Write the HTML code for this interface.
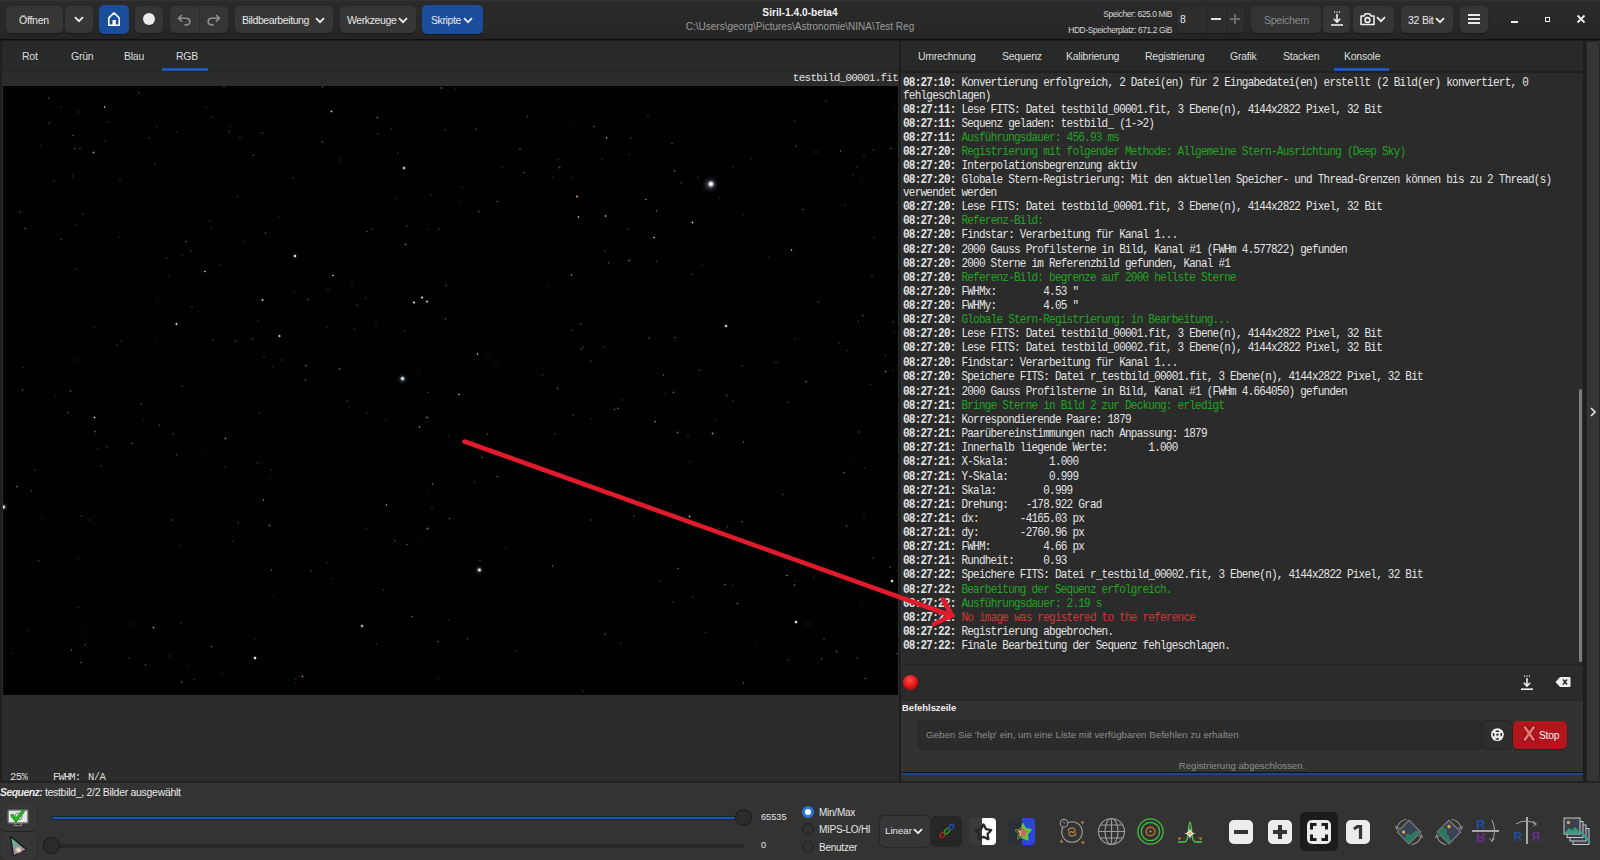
<!DOCTYPE html>
<html><head><meta charset="utf-8"><style>
*{margin:0;padding:0;box-sizing:border-box}
html,body{width:1600px;height:860px;overflow:hidden;background:#333333;font-family:"Liberation Sans",sans-serif;color:#e8e8e8}
.a{position:absolute}
.btn{position:absolute;background:#363636;border-radius:5px;box-shadow:0 1px 1px rgba(0,0,0,.35)}
.lbl{position:absolute;font-size:10.5px;letter-spacing:-0.24px;color:#e6e6e6;white-space:pre;line-height:12px}
.mono{font-family:"Liberation Mono",monospace}
#con{position:absolute;left:902px;top:73px;width:681px;height:591px;background:#2b2b2b;overflow:hidden}
#con pre{position:absolute;left:1px;top:3.6px;font-family:"Liberation Mono",monospace;font-size:11px;letter-spacing:-0.76px;line-height:11.667px;color:#e4e4e4;white-space:pre;transform:scaleY(1.08);transform-origin:0 0}
#con pre div{padding-bottom:1.463px}
#con b{font-weight:bold}
.g{color:#22a322}
.r{color:#d43535}
.star{position:absolute;border-radius:50%}
</style></head><body>
<div class="a" style="left:0;top:0;width:1600px;height:39px;background:linear-gradient(#383838 0,#2a2a2a 1.5px,#282828 30px,#262626 34px,#232323 39px)"></div>
<div class="a" style="left:0;top:39px;width:1600px;height:1px;background:#111111"></div>
<div class="a" style="left:0;top:40px;width:1600px;height:1px;background:#1b1b1b"></div>
<div class="btn" style="left:6px;top:6px;width:57px;height:27px;"></div>
<div class="lbl" style="left:19px;top:14px">Öffnen</div>
<div class="btn" style="left:65px;top:6px;width:28px;height:27px;"></div>
<svg class="a" style="left:74px;top:16px" width="10" height="7" viewBox="0 0 10 7"><path d="M1 1.2 L5 5.2 L9 1.2" fill="none" stroke="#ededed" stroke-width="1.8"/></svg>
<div class="btn" style="left:99px;top:5px;width:30px;height:29px;background:#1a4e9c;"></div>
<svg class="a" style="left:107px;top:11px" width="15" height="16" viewBox="0 0 15 16"><path d="M1.8 14.2 V6.8 L7 1.9 L12.2 6.8 V14.2 Z" fill="none" stroke="#ffffff" stroke-width="1.6" stroke-linejoin="round"/><rect x="5.5" y="9" width="3.3" height="5.5" fill="#fff"/></svg>
<div class="btn" style="left:135px;top:6px;width:28px;height:27px;"></div>
<div class="a" style="left:143px;top:13px;width:12px;height:12px;border-radius:50%;background:#ececec"></div>
<div class="btn" style="left:170px;top:6px;width:58px;height:27px;"></div>
<div class="a" style="left:199px;top:6px;width:1px;height:27px;background:#2a2a2a"></div>
<svg class="a" style="left:177px;top:12.7px" width="15" height="13" viewBox="0 0 15 13"><path d="M5 2 L1.6 5.3 L5 8.6 M1.8 5.3 H9.5 A3.3 3.3 0 0 1 9.5 11.9 H7.5" fill="none" stroke="#8e8e8e" stroke-width="1.6"/></svg>
<svg class="a" style="left:206px;top:12.7px" width="15" height="13" viewBox="0 0 15 13"><path d="M10 2 L13.4 5.3 L10 8.6 M13.2 5.3 H5.5 A3.3 3.3 0 0 0 5.5 11.9 H7.5" fill="none" stroke="#8e8e8e" stroke-width="1.6"/></svg>
<div class="btn" style="left:235px;top:6px;width:98px;height:27px;"></div>
<div class="lbl" style="left:242px;top:14px;letter-spacing:-0.4px">Bildbearbeitung</div>
<svg class="a" style="left:314.5px;top:17px" width="10" height="7" viewBox="0 0 10 7"><path d="M1 1.2 L5 5.2 L9 1.2" fill="none" stroke="#ededed" stroke-width="1.8"/></svg>
<div class="btn" style="left:340px;top:6px;width:76px;height:27px;"></div>
<div class="lbl" style="left:347px;top:14px;letter-spacing:-0.4px">Werkzeuge</div>
<svg class="a" style="left:398px;top:17px" width="10" height="7" viewBox="0 0 10 7"><path d="M1 1.2 L5 5.2 L9 1.2" fill="none" stroke="#ededed" stroke-width="1.8"/></svg>
<div class="btn" style="left:422px;top:5px;width:61px;height:29px;background:#1a4e9c;"></div>
<div class="lbl" style="left:431px;top:14px;letter-spacing:-0.4px">Skripte</div>
<svg class="a" style="left:463px;top:17px" width="10" height="7" viewBox="0 0 10 7"><path d="M1 1.2 L5 5.2 L9 1.2" fill="none" stroke="#ededed" stroke-width="1.8"/></svg>
<div class="a" style="left:600px;top:7px;width:400px;text-align:center;font-size:10.2px;font-weight:bold;color:#f0f0f0;line-height:12px">Siril-1.4.0-beta4</div>
<div class="a" style="left:600px;top:20.5px;width:400px;text-align:center;font-size:10px;color:#9c9c9c;line-height:12px">C:\Users\georg\Pictures\Astronomie\NINA\Test Reg</div>
<div class="a" style="left:1000px;top:8.8px;width:172px;text-align:right;font-size:8.4px;letter-spacing:-0.35px;color:#d8d8d8;line-height:10px">Speicher: 625.0 MiB</div>
<div class="a" style="left:1000px;top:24.8px;width:172px;text-align:right;font-size:8.4px;letter-spacing:-0.35px;color:#d8d8d8;line-height:10px">HDD-Speicherplatz: 671.2 GiB</div>
<div class="a" style="left:1177px;top:6px;width:67px;height:27px;background:#2e2e2e;border-radius:5px;box-shadow:0 1px 1px rgba(0,0,0,.3)"></div>
<div class="a" style="left:1207px;top:6px;width:1px;height:27px;background:#262626"></div>
<div class="a" style="left:1226px;top:6px;width:1px;height:27px;background:#262626"></div>
<div class="lbl" style="left:1180px;top:13px;color:#dfe6f0">8</div>
<div class="a" style="left:1211px;top:18px;width:10px;height:2px;background:#e0e0e0"></div>
<div class="a" style="left:1230px;top:18px;width:10px;height:1.6px;background:#6a6a6a"></div>
<div class="a" style="left:1234.2px;top:14px;width:1.6px;height:10px;background:#6a6a6a"></div>
<div class="btn" style="left:1251px;top:6px;width:70px;height:27px;background:#333333;"></div>
<div class="lbl" style="left:1264px;top:14px;color:#8a8a8a">Speichern</div>
<div class="btn" style="left:1323px;top:6px;width:27px;height:27px;"></div>
<svg class="a" style="left:1330px;top:11px" width="14" height="16" viewBox="0 0 14 16"><path d="M4 1.2 H5.2 M6.4 1.2 H7.6 M8.8 1.2 H10" stroke="#eee" stroke-width="1.2"/><path d="M7 3 V11 M3.8 7.8 L7 11 L10.2 7.8" fill="none" stroke="#eee" stroke-width="1.6"/><path d="M1 14 H13" stroke="#eee" stroke-width="1.6"/></svg>
<div class="btn" style="left:1353px;top:6px;width:41px;height:27px;"></div>
<svg class="a" style="left:1359px;top:12px" width="17" height="14" viewBox="0 0 17 14"><path d="M2 4 H5 L6.5 1.8 H10.5 L12 4 H15 V12.5 H2 Z" fill="none" stroke="#eee" stroke-width="1.6" stroke-linejoin="round"/><circle cx="8.5" cy="8" r="2.4" fill="none" stroke="#eee" stroke-width="1.6"/></svg>
<svg class="a" style="left:1376px;top:16px" width="10" height="7" viewBox="0 0 10 7"><path d="M1 1.2 L5 5.2 L9 1.2" fill="none" stroke="#ededed" stroke-width="1.8"/></svg>
<div class="btn" style="left:1401px;top:6px;width:52px;height:27px;"></div>
<div class="lbl" style="left:1408px;top:14px">32 Bit</div>
<svg class="a" style="left:1435px;top:17px" width="10" height="7" viewBox="0 0 10 7"><path d="M1 1.2 L5 5.2 L9 1.2" fill="none" stroke="#ededed" stroke-width="1.8"/></svg>
<div class="btn" style="left:1460px;top:6px;width:28px;height:27px;"></div>
<div class="a" style="left:1468px;top:14px;width:12px;height:1.8px;background:#eaeaea"></div>
<div class="a" style="left:1468px;top:18px;width:12px;height:1.8px;background:#eaeaea"></div>
<div class="a" style="left:1468px;top:22px;width:12px;height:1.8px;background:#eaeaea"></div>
<div class="a" style="left:1511px;top:20.8px;width:7px;height:1.8px;background:#eee"></div>
<div class="a" style="left:1544.8px;top:16.5px;width:5.5px;height:5.5px;border:1.8px solid #eee"></div>
<svg class="a" style="left:1576px;top:14px" width="10" height="10" viewBox="0 0 10 10"><path d="M1.5 1.5 L8.5 8.5 M8.5 1.5 L1.5 8.5" stroke="#eee" stroke-width="1.8"/></svg>
<div class="a" style="left:0;top:40px;width:2px;height:743px;background:#1f1f1f"></div>
<div class="a" style="left:2px;top:41px;width:897px;height:30px;background:#282929"></div>
<div class="a" style="left:2px;top:71px;width:897px;height:1px;background:#232323"></div>
<div class="a" style="left:2px;top:72px;width:897px;height:711px;background:#2c2c2c"></div>
<div class="lbl" style="left:22px;top:49.5px;color:#dcdcdc">Rot</div>
<div class="lbl" style="left:71px;top:49.5px;color:#dcdcdc">Grün</div>
<div class="lbl" style="left:124px;top:49.5px;color:#dcdcdc">Blau</div>
<div class="lbl" style="left:176px;top:49.5px;color:#dcdcdc">RGB</div>
<div class="a" style="left:162px;top:68px;width:46px;height:3px;background:#1d58b4"></div>
<div class="a mono" style="left:700px;top:72px;width:198px;text-align:right;font-size:11px;letter-spacing:-0.76px;color:#e0e0e0;line-height:13px;white-space:pre">testbild_00001.fit</div>
<div class="a" id="img" style="left:3px;top:86px;width:895px;height:609px;background:#010101;overflow:hidden"><div class="star" style="left:289.0px;top:90.9px;width:2.4px;height:2.4px;background:radial-gradient(circle,#515151 0,#515151 25%,transparent 70%)"></div><div class="star" style="left:63.7px;top:325.4px;width:2.4px;height:2.4px;background:radial-gradient(circle,#2c3f2c 0,#2c3f2c 25%,transparent 70%)"></div><div class="star" style="left:50.8px;top:308.0px;width:2.4px;height:2.4px;background:radial-gradient(circle,#2a2a2a 0,#2a2a2a 25%,transparent 70%)"></div><div class="star" style="left:387.3px;top:41.5px;width:2.4px;height:2.4px;background:radial-gradient(circle,#1f2d1f 0,#1f2d1f 25%,transparent 70%)"></div><div class="star" style="left:379.2px;top:502.6px;width:2.4px;height:2.4px;background:radial-gradient(circle,#2f2a1c 0,#2f2a1c 25%,transparent 70%)"></div><div class="star" style="left:563.8px;top:354.0px;width:2.4px;height:2.4px;background:radial-gradient(circle,#1e2b1e 0,#1e2b1e 25%,transparent 70%)"></div><div class="star" style="left:523.4px;top:29.2px;width:2.4px;height:2.4px;background:radial-gradient(circle,#363636 0,#363636 25%,transparent 70%)"></div><div class="star" style="left:497.6px;top:80.1px;width:2.4px;height:2.4px;background:radial-gradient(circle,#423b27 0,#423b27 25%,transparent 70%)"></div><div class="star" style="left:483.3px;top:346.7px;width:2.4px;height:2.4px;background:radial-gradient(circle,#4b432d 0,#4b432d 25%,transparent 70%)"></div><div class="star" style="left:91.1px;top:346.9px;width:2.4px;height:2.4px;background:radial-gradient(circle,#342c1a 0,#342c1a 25%,transparent 70%)"></div><div class="star" style="left:86.1px;top:432.7px;width:2.4px;height:2.4px;background:radial-gradient(circle,#4c4c4c 0,#4c4c4c 25%,transparent 70%)"></div><div class="star" style="left:553.4px;top:301.3px;width:2.4px;height:2.4px;background:radial-gradient(circle,#3b424a 0,#3b424a 25%,transparent 70%)"></div><div class="star" style="left:695.2px;top:282.6px;width:2.4px;height:2.4px;background:radial-gradient(circle,#453a22 0,#453a22 25%,transparent 70%)"></div><div class="star" style="left:267.4px;top:482.8px;width:2.4px;height:2.4px;background:radial-gradient(circle,#544b32 0,#544b32 25%,transparent 70%)"></div><div class="star" style="left:72.1px;top:181.9px;width:2.4px;height:2.4px;background:radial-gradient(circle,#473c23 0,#473c23 25%,transparent 70%)"></div><div class="star" style="left:652.4px;top:174.4px;width:2.4px;height:2.4px;background:radial-gradient(circle,#2c2c2c 0,#2c2c2c 25%,transparent 70%)"></div><div class="star" style="left:457.5px;top:99.5px;width:2.4px;height:2.4px;background:radial-gradient(circle,#3d3624 0,#3d3624 25%,transparent 70%)"></div><div class="star" style="left:835.0px;top:255.8px;width:2.4px;height:2.4px;background:radial-gradient(circle,#525252 0,#525252 25%,transparent 70%)"></div><div class="star" style="left:683.9px;top:348.0px;width:2.4px;height:2.4px;background:radial-gradient(circle,#5c4e2e 0,#5c4e2e 25%,transparent 70%)"></div><div class="star" style="left:303.5px;top:212.3px;width:2.4px;height:2.4px;background:radial-gradient(circle,#314731 0,#314731 25%,transparent 70%)"></div><div class="star" style="left:712.8px;top:40.9px;width:2.4px;height:2.4px;background:radial-gradient(circle,#2d2616 0,#2d2616 25%,transparent 70%)"></div><div class="star" style="left:423.6px;top:403.5px;width:2.4px;height:2.4px;background:radial-gradient(circle,#2b2415 0,#2b2415 25%,transparent 70%)"></div><div class="star" style="left:578.6px;top:603.8px;width:2.4px;height:2.4px;background:radial-gradient(circle,#49525c 0,#49525c 25%,transparent 70%)"></div><div class="star" style="left:253.8px;top:233.9px;width:2.4px;height:2.4px;background:radial-gradient(circle,#524529 0,#524529 25%,transparent 70%)"></div><div class="star" style="left:19.0px;top:280.2px;width:2.4px;height:2.4px;background:radial-gradient(circle,#233223 0,#233223 25%,transparent 70%)"></div><div class="star" style="left:103.7px;top:34.9px;width:2.4px;height:2.4px;background:radial-gradient(circle,#594b2c 0,#594b2c 25%,transparent 70%)"></div><div class="star" style="left:114.7px;top:149.8px;width:2.4px;height:2.4px;background:radial-gradient(circle,#343a41 0,#343a41 25%,transparent 70%)"></div><div class="star" style="left:71.0px;top:272.6px;width:2.4px;height:2.4px;background:radial-gradient(circle,#4b3f25 0,#4b3f25 25%,transparent 70%)"></div><div class="star" style="left:790.3px;top:497.9px;width:2.4px;height:2.4px;background:radial-gradient(circle,#425f42 0,#425f42 25%,transparent 70%)"></div><div class="star" style="left:248.3px;top:251.9px;width:2.4px;height:2.4px;background:radial-gradient(circle,#31373e 0,#31373e 25%,transparent 70%)"></div><div class="star" style="left:856.9px;top:90.9px;width:2.4px;height:2.4px;background:radial-gradient(circle,#332d1e 0,#332d1e 25%,transparent 70%)"></div><div class="star" style="left:206.6px;top:141.1px;width:2.4px;height:2.4px;background:radial-gradient(circle,#314731 0,#314731 25%,transparent 70%)"></div><div class="star" style="left:162.2px;top:170.7px;width:2.4px;height:2.4px;background:radial-gradient(circle,#272c31 0,#272c31 25%,transparent 70%)"></div><div class="star" style="left:477.8px;top:370.4px;width:2.4px;height:2.4px;background:radial-gradient(circle,#3c3624 0,#3c3624 25%,transparent 70%)"></div><div class="star" style="left:617.5px;top:312.9px;width:2.4px;height:2.4px;background:radial-gradient(circle,#4f4f4f 0,#4f4f4f 25%,transparent 70%)"></div><div class="star" style="left:408.0px;top:529.4px;width:2.4px;height:2.4px;background:radial-gradient(circle,#425f42 0,#425f42 25%,transparent 70%)"></div><div class="star" style="left:350.4px;top:242.0px;width:2.4px;height:2.4px;background:radial-gradient(circle,#24292e 0,#24292e 25%,transparent 70%)"></div><div class="star" style="left:567.1px;top:36.9px;width:2.4px;height:2.4px;background:radial-gradient(circle,#2c271a 0,#2c271a 25%,transparent 70%)"></div><div class="star" style="left:393.6px;top:65.9px;width:2.4px;height:2.4px;background:radial-gradient(circle,#4e4e4e 0,#4e4e4e 25%,transparent 70%)"></div><div class="star" style="left:90.5px;top:344.2px;width:2.4px;height:2.4px;background:radial-gradient(circle,#4a4a4a 0,#4a4a4a 25%,transparent 70%)"></div><div class="star" style="left:849.1px;top:372.8px;width:2.4px;height:2.4px;background:radial-gradient(circle,#2c271a 0,#2c271a 25%,transparent 70%)"></div><div class="star" style="left:549.0px;top:89.5px;width:2.4px;height:2.4px;background:radial-gradient(circle,#382f1c 0,#382f1c 25%,transparent 70%)"></div><div class="star" style="left:538.4px;top:287.8px;width:2.4px;height:2.4px;background:radial-gradient(circle,#252a2f 0,#252a2f 25%,transparent 70%)"></div><div class="star" style="left:888.6px;top:282.8px;width:2.4px;height:2.4px;background:radial-gradient(circle,#463b23 0,#463b23 25%,transparent 70%)"></div><div class="star" style="left:75.8px;top:61.2px;width:2.4px;height:2.4px;background:radial-gradient(circle,#3d331e 0,#3d331e 25%,transparent 70%)"></div><div class="star" style="left:427.6px;top:420.5px;width:2.4px;height:2.4px;background:radial-gradient(circle,#494949 0,#494949 25%,transparent 70%)"></div><div class="star" style="left:182.7px;top:578.8px;width:2.4px;height:2.4px;background:radial-gradient(circle,#3f3825 0,#3f3825 25%,transparent 70%)"></div><div class="star" style="left:617.1px;top:555.7px;width:2.4px;height:2.4px;background:radial-gradient(circle,#3d583d 0,#3d583d 25%,transparent 70%)"></div><div class="star" style="left:265.9px;top:390.5px;width:2.4px;height:2.4px;background:radial-gradient(circle,#2d2616 0,#2d2616 25%,transparent 70%)"></div><div class="star" style="left:463.3px;top:552.1px;width:2.4px;height:2.4px;background:radial-gradient(circle,#3e3725 0,#3e3725 25%,transparent 70%)"></div><div class="star" style="left:476.0px;top:473.4px;width:2.4px;height:2.4px;background:radial-gradient(circle,#3d3624 0,#3d3624 25%,transparent 70%)"></div><div class="star" style="left:548.3px;top:479.1px;width:2.4px;height:2.4px;background:radial-gradient(circle,#584f34 0,#584f34 25%,transparent 70%)"></div><div class="star" style="left:721.0px;top:497.4px;width:2.4px;height:2.4px;background:radial-gradient(circle,#574e34 0,#574e34 25%,transparent 70%)"></div><div class="star" style="left:177.9px;top:299.1px;width:2.4px;height:2.4px;background:radial-gradient(circle,#565656 0,#565656 25%,transparent 70%)"></div><div class="star" style="left:885.5px;top:480.2px;width:2.4px;height:2.4px;background:radial-gradient(circle,#463b23 0,#463b23 25%,transparent 70%)"></div><div class="star" style="left:172.3px;top:367.5px;width:2.4px;height:2.4px;background:radial-gradient(circle,#31373e 0,#31373e 25%,transparent 70%)"></div><div class="star" style="left:723.3px;top:439.4px;width:2.4px;height:2.4px;background:radial-gradient(circle,#3e341f 0,#3e341f 25%,transparent 70%)"></div><div class="star" style="left:71.0px;top:61.2px;width:2.4px;height:2.4px;background:radial-gradient(circle,#463f2a 0,#463f2a 25%,transparent 70%)"></div><div class="star" style="left:301.4px;top:292.9px;width:2.4px;height:2.4px;background:radial-gradient(circle,#4f4f4f 0,#4f4f4f 25%,transparent 70%)"></div><div class="star" style="left:428.4px;top:396.7px;width:2.4px;height:2.4px;background:radial-gradient(circle,#5b5b5b 0,#5b5b5b 25%,transparent 70%)"></div><div class="star" style="left:746.6px;top:72.0px;width:2.4px;height:2.4px;background:radial-gradient(circle,#403926 0,#403926 25%,transparent 70%)"></div><div class="star" style="left:427.1px;top:107.7px;width:2.4px;height:2.4px;background:radial-gradient(circle,#5a4c2d 0,#5a4c2d 25%,transparent 70%)"></div><div class="star" style="left:76.5px;top:575.2px;width:2.4px;height:2.4px;background:radial-gradient(circle,#444d56 0,#444d56 25%,transparent 70%)"></div><div class="star" style="left:413.8px;top:451.7px;width:2.4px;height:2.4px;background:radial-gradient(circle,#2d281b 0,#2d281b 25%,transparent 70%)"></div><div class="star" style="left:151.1px;top:76.4px;width:2.4px;height:2.4px;background:radial-gradient(circle,#223122 0,#223122 25%,transparent 70%)"></div><div class="star" style="left:809.5px;top:490.2px;width:2.4px;height:2.4px;background:radial-gradient(circle,#223122 0,#223122 25%,transparent 70%)"></div><div class="star" style="left:739.4px;top:596.0px;width:2.4px;height:2.4px;background:radial-gradient(circle,#524529 0,#524529 25%,transparent 70%)"></div><div class="star" style="left:138.5px;top:332.9px;width:2.4px;height:2.4px;background:radial-gradient(circle,#292929 0,#292929 25%,transparent 70%)"></div><div class="star" style="left:715.0px;top:441.4px;width:2.4px;height:2.4px;background:radial-gradient(circle,#202e20 0,#202e20 25%,transparent 70%)"></div><div class="star" style="left:670.3px;top:83.8px;width:2.4px;height:2.4px;background:radial-gradient(circle,#5f5539 0,#5f5539 25%,transparent 70%)"></div><div class="star" style="left:739.0px;top:127.5px;width:2.4px;height:2.4px;background:radial-gradient(circle,#383221 0,#383221 25%,transparent 70%)"></div><div class="star" style="left:261.3px;top:145.5px;width:2.4px;height:2.4px;background:radial-gradient(circle,#4d4126 0,#4d4126 25%,transparent 70%)"></div><div class="star" style="left:231.2px;top:254.2px;width:2.4px;height:2.4px;background:radial-gradient(circle,#303030 0,#303030 25%,transparent 70%)"></div><div class="star" style="left:814.2px;top:214.5px;width:2.4px;height:2.4px;background:radial-gradient(circle,#304530 0,#304530 25%,transparent 70%)"></div><div class="star" style="left:729.1px;top:313.7px;width:2.4px;height:2.4px;background:radial-gradient(circle,#405c40 0,#405c40 25%,transparent 70%)"></div><div class="star" style="left:116.0px;top:91.5px;width:2.4px;height:2.4px;background:radial-gradient(circle,#484848 0,#484848 25%,transparent 70%)"></div><div class="star" style="left:780.8px;top:471.9px;width:2.4px;height:2.4px;background:radial-gradient(circle,#4e4e4e 0,#4e4e4e 25%,transparent 70%)"></div><div class="star" style="left:694.1px;top:90.2px;width:2.4px;height:2.4px;background:radial-gradient(circle,#272c31 0,#272c31 25%,transparent 70%)"></div><div class="star" style="left:553.5px;top:72.3px;width:2.4px;height:2.4px;background:radial-gradient(circle,#2b2415 0,#2b2415 25%,transparent 70%)"></div><div class="star" style="left:610.2px;top:322.2px;width:2.4px;height:2.4px;background:radial-gradient(circle,#464646 0,#464646 25%,transparent 70%)"></div><div class="star" style="left:790.2px;top:33.6px;width:2.4px;height:2.4px;background:radial-gradient(circle,#342c1a 0,#342c1a 25%,transparent 70%)"></div><div class="star" style="left:36.6px;top:58.5px;width:2.4px;height:2.4px;background:radial-gradient(circle,#2f442f 0,#2f442f 25%,transparent 70%)"></div><div class="star" style="left:23.8px;top:543.5px;width:2.4px;height:2.4px;background:radial-gradient(circle,#23272c 0,#23272c 25%,transparent 70%)"></div><div class="star" style="left:290.5px;top:591.8px;width:2.4px;height:2.4px;background:radial-gradient(circle,#364e36 0,#364e36 25%,transparent 70%)"></div><div class="star" style="left:177.5px;top:167.8px;width:2.4px;height:2.4px;background:radial-gradient(circle,#324832 0,#324832 25%,transparent 70%)"></div><div class="star" style="left:722.2px;top:308.2px;width:2.4px;height:2.4px;background:radial-gradient(circle,#263726 0,#263726 25%,transparent 70%)"></div><div class="star" style="left:784.2px;top:572.8px;width:2.4px;height:2.4px;background:radial-gradient(circle,#273827 0,#273827 25%,transparent 70%)"></div><div class="star" style="left:798.7px;top:122.4px;width:2.4px;height:2.4px;background:radial-gradient(circle,#443d28 0,#443d28 25%,transparent 70%)"></div><div class="star" style="left:372.1px;top:237.9px;width:2.4px;height:2.4px;background:radial-gradient(circle,#3c3c3c 0,#3c3c3c 25%,transparent 70%)"></div><div class="star" style="left:600.2px;top:259.9px;width:2.4px;height:2.4px;background:radial-gradient(circle,#352d1a 0,#352d1a 25%,transparent 70%)"></div><div class="star" style="left:701.2px;top:545.3px;width:2.4px;height:2.4px;background:radial-gradient(circle,#312918 0,#312918 25%,transparent 70%)"></div><div class="star" style="left:126.9px;top:536.6px;width:2.4px;height:2.4px;background:radial-gradient(circle,#453e29 0,#453e29 25%,transparent 70%)"></div><div class="star" style="left:667.8px;top:56.3px;width:2.4px;height:2.4px;background:radial-gradient(circle,#473f2a 0,#473f2a 25%,transparent 70%)"></div><div class="star" style="left:885.7px;top:506.0px;width:2.4px;height:2.4px;background:radial-gradient(circle,#282d32 0,#282d32 25%,transparent 70%)"></div><div class="star" style="left:889.5px;top:244.9px;width:2.4px;height:2.4px;background:radial-gradient(circle,#423b27 0,#423b27 25%,transparent 70%)"></div><div class="star" style="left:318.3px;top:55.1px;width:2.4px;height:2.4px;background:radial-gradient(circle,#3f3f3f 0,#3f3f3f 25%,transparent 70%)"></div><div class="star" style="left:301.6px;top:278.3px;width:2.4px;height:2.4px;background:radial-gradient(circle,#555555 0,#555555 25%,transparent 70%)"></div><div class="star" style="left:343.2px;top:314.1px;width:2.4px;height:2.4px;background:radial-gradient(circle,#283a28 0,#283a28 25%,transparent 70%)"></div><div class="star" style="left:859.7px;top:67.7px;width:2.4px;height:2.4px;background:radial-gradient(circle,#5a5136 0,#5a5136 25%,transparent 70%)"></div><div class="star" style="left:869.4px;top:62.8px;width:2.4px;height:2.4px;background:radial-gradient(circle,#382f1c 0,#382f1c 25%,transparent 70%)"></div><div class="star" style="left:34.3px;top:473.4px;width:2.4px;height:2.4px;background:radial-gradient(circle,#393322 0,#393322 25%,transparent 70%)"></div><div class="star" style="left:733.3px;top:516.4px;width:2.4px;height:2.4px;background:radial-gradient(circle,#534629 0,#534629 25%,transparent 70%)"></div><div class="star" style="left:362.5px;top:325.8px;width:2.4px;height:2.4px;background:radial-gradient(circle,#324832 0,#324832 25%,transparent 70%)"></div><div class="star" style="left:442.0px;top:198.2px;width:2.4px;height:2.4px;background:radial-gradient(circle,#393939 0,#393939 25%,transparent 70%)"></div><div class="star" style="left:715.2px;top:110.7px;width:2.4px;height:2.4px;background:radial-gradient(circle,#2c2516 0,#2c2516 25%,transparent 70%)"></div><div class="star" style="left:839.6px;top:385.4px;width:2.4px;height:2.4px;background:radial-gradient(circle,#5b4d2d 0,#5b4d2d 25%,transparent 70%)"></div><div class="star" style="left:73.8px;top:520.4px;width:2.4px;height:2.4px;background:radial-gradient(circle,#2c2516 0,#2c2516 25%,transparent 70%)"></div><div class="star" style="left:771.8px;top:275.3px;width:2.4px;height:2.4px;background:radial-gradient(circle,#2a3d2a 0,#2a3d2a 25%,transparent 70%)"></div><div class="star" style="left:373.1px;top:556.5px;width:2.4px;height:2.4px;background:radial-gradient(circle,#4f472f 0,#4f472f 25%,transparent 70%)"></div><div class="star" style="left:37.5px;top:431.1px;width:2.4px;height:2.4px;background:radial-gradient(circle,#2f2a1c 0,#2f2a1c 25%,transparent 70%)"></div><div class="star" style="left:233.5px;top:109.3px;width:2.4px;height:2.4px;background:radial-gradient(circle,#3b321d 0,#3b321d 25%,transparent 70%)"></div><div class="star" style="left:474.7px;top:124.4px;width:2.4px;height:2.4px;background:radial-gradient(circle,#2f442f 0,#2f442f 25%,transparent 70%)"></div><div class="star" style="left:601.1px;top:163.7px;width:2.4px;height:2.4px;background:radial-gradient(circle,#5b5b5b 0,#5b5b5b 25%,transparent 70%)"></div><div class="star" style="left:889.9px;top:21.5px;width:2.4px;height:2.4px;background:radial-gradient(circle,#1c291c 0,#1c291c 25%,transparent 70%)"></div><div class="star" style="left:492.5px;top:114.4px;width:2.4px;height:2.4px;background:radial-gradient(circle,#463f2a 0,#463f2a 25%,transparent 70%)"></div><div class="star" style="left:836.2px;top:63.7px;width:2.4px;height:2.4px;background:radial-gradient(circle,#49525c 0,#49525c 25%,transparent 70%)"></div><div class="star" style="left:587.0px;top:331.5px;width:2.4px;height:2.4px;background:radial-gradient(circle,#2d412d 0,#2d412d 25%,transparent 70%)"></div><div class="star" style="left:274.6px;top:130.0px;width:2.4px;height:2.4px;background:radial-gradient(circle,#362d1b 0,#362d1b 25%,transparent 70%)"></div><div class="star" style="left:176.8px;top:536.1px;width:2.4px;height:2.4px;background:radial-gradient(circle,#564d33 0,#564d33 25%,transparent 70%)"></div><div class="star" style="left:361.4px;top:210.7px;width:2.4px;height:2.4px;background:radial-gradient(circle,#2b2619 0,#2b2619 25%,transparent 70%)"></div><div class="star" style="left:11.6px;top:379.9px;width:2.4px;height:2.4px;background:radial-gradient(circle,#2c3238 0,#2c3238 25%,transparent 70%)"></div><div class="star" style="left:145.1px;top:50.5px;width:2.4px;height:2.4px;background:radial-gradient(circle,#4a535d 0,#4a535d 25%,transparent 70%)"></div><div class="star" style="left:778.8px;top:407.4px;width:2.4px;height:2.4px;background:radial-gradient(circle,#283a28 0,#283a28 25%,transparent 70%)"></div><div class="star" style="left:215.8px;top:177.5px;width:2.4px;height:2.4px;background:radial-gradient(circle,#453e29 0,#453e29 25%,transparent 70%)"></div><div class="star" style="left:139.9px;top:270.5px;width:2.4px;height:2.4px;background:radial-gradient(circle,#382f1c 0,#382f1c 25%,transparent 70%)"></div><div class="star" style="left:860.6px;top:591.3px;width:2.4px;height:2.4px;background:radial-gradient(circle,#4b3f25 0,#4b3f25 25%,transparent 70%)"></div><div class="star" style="left:217.8px;top:587.1px;width:2.4px;height:2.4px;background:radial-gradient(circle,#3b3523 0,#3b3523 25%,transparent 70%)"></div><div class="star" style="left:318.3px;top:-0.3px;width:2.4px;height:2.4px;background:radial-gradient(circle,#404040 0,#404040 25%,transparent 70%)"></div><div class="star" style="left:424.1px;top:305.2px;width:2.4px;height:2.4px;background:radial-gradient(circle,#342e1f 0,#342e1f 25%,transparent 70%)"></div><div class="star" style="left:451.0px;top:2.0px;width:2.4px;height:2.4px;background:radial-gradient(circle,#383838 0,#383838 25%,transparent 70%)"></div><div class="star" style="left:127.7px;top:356.4px;width:2.4px;height:2.4px;background:radial-gradient(circle,#414141 0,#414141 25%,transparent 70%)"></div><div class="star" style="left:267.3px;top:382.5px;width:2.4px;height:2.4px;background:radial-gradient(circle,#1f2d1f 0,#1f2d1f 25%,transparent 70%)"></div><div class="star" style="left:856.8px;top:518.6px;width:2.4px;height:2.4px;background:radial-gradient(circle,#223122 0,#223122 25%,transparent 70%)"></div><div class="star" style="left:347.8px;top:197.6px;width:2.4px;height:2.4px;background:radial-gradient(circle,#473f2a 0,#473f2a 25%,transparent 70%)"></div><div class="star" style="left:253.4px;top:375.8px;width:2.4px;height:2.4px;background:radial-gradient(circle,#313131 0,#313131 25%,transparent 70%)"></div><div class="star" style="left:737.9px;top:434.4px;width:2.4px;height:2.4px;background:radial-gradient(circle,#394048 0,#394048 25%,transparent 70%)"></div><div class="star" style="left:656.3px;top:493.6px;width:2.4px;height:2.4px;background:radial-gradient(circle,#213021 0,#213021 25%,transparent 70%)"></div><div class="star" style="left:673.4px;top:345.2px;width:2.4px;height:2.4px;background:radial-gradient(circle,#5c5c5c 0,#5c5c5c 25%,transparent 70%)"></div><div class="star" style="left:739.3px;top:354.7px;width:2.4px;height:2.4px;background:radial-gradient(circle,#554c33 0,#554c33 25%,transparent 70%)"></div><div class="star" style="left:75.0px;top:24.5px;width:2.4px;height:2.4px;background:radial-gradient(circle,#504428 0,#504428 25%,transparent 70%)"></div><div class="star" style="left:858.5px;top:228.4px;width:2.4px;height:2.4px;background:radial-gradient(circle,#2f442f 0,#2f442f 25%,transparent 70%)"></div><div class="star" style="left:44.3px;top:10.5px;width:2.4px;height:2.4px;background:radial-gradient(circle,#4a422c 0,#4a422c 25%,transparent 70%)"></div><div class="star" style="left:437.2px;top:1.0px;width:2.4px;height:2.4px;background:radial-gradient(circle,#5b5b5b 0,#5b5b5b 25%,transparent 70%)"></div><div class="star" style="left:669.2px;top:305.3px;width:2.4px;height:2.4px;background:radial-gradient(circle,#4a4a4a 0,#4a4a4a 25%,transparent 70%)"></div><div class="star" style="left:589.5px;top:39.2px;width:2.4px;height:2.4px;background:radial-gradient(circle,#454e57 0,#454e57 25%,transparent 70%)"></div><div class="star" style="left:224.8px;top:44.3px;width:2.4px;height:2.4px;background:radial-gradient(circle,#383221 0,#383221 25%,transparent 70%)"></div><div class="star" style="left:652.3px;top:124.0px;width:2.4px;height:2.4px;background:radial-gradient(circle,#454e57 0,#454e57 25%,transparent 70%)"></div><div class="star" style="left:441.4px;top:232.0px;width:2.4px;height:2.4px;background:radial-gradient(circle,#463b23 0,#463b23 25%,transparent 70%)"></div><div class="star" style="left:686.0px;top:374.7px;width:2.4px;height:2.4px;background:radial-gradient(circle,#514830 0,#514830 25%,transparent 70%)"></div><div class="star" style="left:68.2px;top:88.8px;width:2.4px;height:2.4px;background:radial-gradient(circle,#382f1c 0,#382f1c 25%,transparent 70%)"></div><div class="star" style="left:555.4px;top:80.3px;width:2.4px;height:2.4px;background:radial-gradient(circle,#464646 0,#464646 25%,transparent 70%)"></div><div class="star" style="left:434.1px;top:591.3px;width:2.4px;height:2.4px;background:radial-gradient(circle,#2e291b 0,#2e291b 25%,transparent 70%)"></div><div class="star" style="left:604.2px;top:176.1px;width:2.4px;height:2.4px;background:radial-gradient(circle,#493e24 0,#493e24 25%,transparent 70%)"></div><div class="star" style="left:415.1px;top:283.0px;width:2.4px;height:2.4px;background:radial-gradient(circle,#202f20 0,#202f20 25%,transparent 70%)"></div><div class="star" style="left:177.3px;top:594.7px;width:2.4px;height:2.4px;background:radial-gradient(circle,#464646 0,#464646 25%,transparent 70%)"></div><div class="star" style="left:258.3px;top:45.6px;width:2.4px;height:2.4px;background:radial-gradient(circle,#394048 0,#394048 25%,transparent 70%)"></div><div class="star" style="left:889.4px;top:234.6px;width:2.4px;height:2.4px;background:radial-gradient(circle,#353535 0,#353535 25%,transparent 70%)"></div><div class="star" style="left:519.8px;top:85.3px;width:2.4px;height:2.4px;background:radial-gradient(circle,#493e24 0,#493e24 25%,transparent 70%)"></div><div class="star" style="left:852.5px;top:79.8px;width:2.4px;height:2.4px;background:radial-gradient(circle,#405c40 0,#405c40 25%,transparent 70%)"></div><div class="star" style="left:249.3px;top:67.6px;width:2.4px;height:2.4px;background:radial-gradient(circle,#3f3825 0,#3f3825 25%,transparent 70%)"></div><div class="star" style="left:444.9px;top:532.6px;width:2.4px;height:2.4px;background:radial-gradient(circle,#414141 0,#414141 25%,transparent 70%)"></div><div class="star" style="left:141.3px;top:577.5px;width:2.4px;height:2.4px;background:radial-gradient(circle,#424a53 0,#424a53 25%,transparent 70%)"></div><div class="star" style="left:362.1px;top:441.9px;width:2.4px;height:2.4px;background:radial-gradient(circle,#423821 0,#423821 25%,transparent 70%)"></div><div class="star" style="left:335.8px;top:72.6px;width:2.4px;height:2.4px;background:radial-gradient(circle,#3d3d3d 0,#3d3d3d 25%,transparent 70%)"></div><div class="star" style="left:289.6px;top:205.0px;width:2.4px;height:2.4px;background:radial-gradient(circle,#414141 0,#414141 25%,transparent 70%)"></div><div class="star" style="left:840.9px;top:118.2px;width:2.4px;height:2.4px;background:radial-gradient(circle,#282214 0,#282214 25%,transparent 70%)"></div><div class="star" style="left:225.7px;top:38.6px;width:2.4px;height:2.4px;background:radial-gradient(circle,#2c402c 0,#2c402c 25%,transparent 70%)"></div><div class="star" style="left:67.3px;top:562.6px;width:2.4px;height:2.4px;background:radial-gradient(circle,#584a2c 0,#584a2c 25%,transparent 70%)"></div><div class="star" style="left:764.2px;top:169.9px;width:2.4px;height:2.4px;background:radial-gradient(circle,#2b2415 0,#2b2415 25%,transparent 70%)"></div><div class="star" style="left:567.7px;top:89.7px;width:2.4px;height:2.4px;background:radial-gradient(circle,#2d3339 0,#2d3339 25%,transparent 70%)"></div><div class="star" style="left:456.6px;top:114.6px;width:2.4px;height:2.4px;background:radial-gradient(circle,#32383f 0,#32383f 25%,transparent 70%)"></div><div class="star" style="left:791.1px;top:493.5px;width:2.4px;height:2.4px;background:radial-gradient(circle,#404850 0,#404850 25%,transparent 70%)"></div><div class="star" style="left:817.2px;top:571.9px;width:2.4px;height:2.4px;background:radial-gradient(circle,#4b432d 0,#4b432d 25%,transparent 70%)"></div><div class="star" style="left:643.5px;top:29.1px;width:2.4px;height:2.4px;background:radial-gradient(circle,#444d56 0,#444d56 25%,transparent 70%)"></div><div class="star" style="left:402.8px;top:457.4px;width:2.4px;height:2.4px;background:radial-gradient(circle,#514428 0,#514428 25%,transparent 70%)"></div><div class="star" style="left:433.9px;top:554.4px;width:2.4px;height:2.4px;background:radial-gradient(circle,#4b432d 0,#4b432d 25%,transparent 70%)"></div><div class="star" style="left:151.8px;top:251.7px;width:2.4px;height:2.4px;background:radial-gradient(circle,#3a311d 0,#3a311d 25%,transparent 70%)"></div><div class="star" style="left:227.9px;top:448.9px;width:2.4px;height:2.4px;background:radial-gradient(circle,#514428 0,#514428 25%,transparent 70%)"></div><div class="star" style="left:362.8px;top:144.3px;width:2.4px;height:2.4px;background:radial-gradient(circle,#314631 0,#314631 25%,transparent 70%)"></div><div class="star" style="left:598.1px;top:71.9px;width:2.4px;height:2.4px;background:radial-gradient(circle,#514830 0,#514830 25%,transparent 70%)"></div><div class="star" style="left:66.2px;top:303.9px;width:2.4px;height:2.4px;background:radial-gradient(circle,#48515b 0,#48515b 25%,transparent 70%)"></div><div class="star" style="left:491.9px;top:274.9px;width:2.4px;height:2.4px;background:radial-gradient(circle,#30363d 0,#30363d 25%,transparent 70%)"></div><div class="star" style="left:381.8px;top:332.6px;width:2.4px;height:2.4px;background:radial-gradient(circle,#373737 0,#373737 25%,transparent 70%)"></div><div class="star" style="left:155.3px;top:337.5px;width:2.4px;height:2.4px;background:radial-gradient(circle,#3c3624 0,#3c3624 25%,transparent 70%)"></div><div class="star" style="left:328.8px;top:491.9px;width:2.4px;height:2.4px;background:radial-gradient(circle,#343434 0,#343434 25%,transparent 70%)"></div><div class="star" style="left:670.5px;top:250.4px;width:2.4px;height:2.4px;background:radial-gradient(circle,#2e422e 0,#2e422e 25%,transparent 70%)"></div><div class="star" style="left:187.0px;top:163.6px;width:2.4px;height:2.4px;background:radial-gradient(circle,#585858 0,#585858 25%,transparent 70%)"></div><div class="star" style="left:445.1px;top:348.7px;width:2.4px;height:2.4px;background:radial-gradient(circle,#3f3825 0,#3f3825 25%,transparent 70%)"></div><div class="star" style="left:614.1px;top:321.3px;width:2.4px;height:2.4px;background:radial-gradient(circle,#5a5136 0,#5a5136 25%,transparent 70%)"></div><div class="star" style="left:81.8px;top:545.1px;width:2.4px;height:2.4px;background:radial-gradient(circle,#333940 0,#333940 25%,transparent 70%)"></div><div class="star" style="left:577.4px;top:262.0px;width:2.4px;height:2.4px;background:radial-gradient(circle,#3b3b3b 0,#3b3b3b 25%,transparent 70%)"></div><div class="star" style="left:112.8px;top:257.9px;width:2.4px;height:2.4px;background:radial-gradient(circle,#464f58 0,#464f58 25%,transparent 70%)"></div><div class="star" style="left:866.4px;top:297.3px;width:2.4px;height:2.4px;background:radial-gradient(circle,#23272c 0,#23272c 25%,transparent 70%)"></div><div class="star" style="left:832.3px;top:564.2px;width:2.4px;height:2.4px;background:radial-gradient(circle,#3a4149 0,#3a4149 25%,transparent 70%)"></div><div class="star" style="left:869.9px;top:150.3px;width:2.4px;height:2.4px;background:radial-gradient(circle,#2e291b 0,#2e291b 25%,transparent 70%)"></div><div class="star" style="left:137.1px;top:317.1px;width:2.4px;height:2.4px;background:radial-gradient(circle,#535353 0,#535353 25%,transparent 70%)"></div><div class="star" style="left:842.4px;top:438.5px;width:2.4px;height:2.4px;background:radial-gradient(circle,#404851 0,#404851 25%,transparent 70%)"></div><div class="star" style="left:75.0px;top:472.1px;width:2.4px;height:2.4px;background:radial-gradient(circle,#282418 0,#282418 25%,transparent 70%)"></div><div class="star" style="left:207.2px;top:559.2px;width:2.4px;height:2.4px;background:radial-gradient(circle,#514428 0,#514428 25%,transparent 70%)"></div><div class="star" style="left:861.1px;top:380.5px;width:2.4px;height:2.4px;background:radial-gradient(circle,#3a4149 0,#3a4149 25%,transparent 70%)"></div><div class="star" style="left:624.7px;top:67.3px;width:2.4px;height:2.4px;background:radial-gradient(circle,#2c2516 0,#2c2516 25%,transparent 70%)"></div><div class="star" style="left:468.7px;top:354.0px;width:2.4px;height:2.4px;background:radial-gradient(circle,#403620 0,#403620 25%,transparent 70%)"></div><div class="star" style="left:199.1px;top:365.0px;width:2.4px;height:2.4px;background:radial-gradient(circle,#1c281c 0,#1c281c 25%,transparent 70%)"></div><div class="star" style="left:269.0px;top:279.6px;width:2.4px;height:2.4px;background:radial-gradient(circle,#3c3624 0,#3c3624 25%,transparent 70%)"></div><div class="star" style="left:424.7px;top:142.0px;width:2.4px;height:2.4px;background:radial-gradient(circle,#373737 0,#373737 25%,transparent 70%)"></div><div class="star" style="left:859.5px;top:428.1px;width:2.4px;height:2.4px;background:radial-gradient(circle,#3b3b3b 0,#3b3b3b 25%,transparent 70%)"></div><div class="star" style="left:18.3px;top:302.5px;width:2.4px;height:2.4px;background:radial-gradient(circle,#424a53 0,#424a53 25%,transparent 70%)"></div><div class="star" style="left:71.5px;top:137.8px;width:2.4px;height:2.4px;background:radial-gradient(circle,#433821 0,#433821 25%,transparent 70%)"></div><div class="star" style="left:202.0px;top:19.8px;width:2.4px;height:2.4px;background:radial-gradient(circle,#30363d 0,#30363d 25%,transparent 70%)"></div><div class="star" style="left:323.4px;top:240.4px;width:2.4px;height:2.4px;background:radial-gradient(circle,#282214 0,#282214 25%,transparent 70%)"></div><div class="star" style="left:661.1px;top:306.5px;width:2.4px;height:2.4px;background:radial-gradient(circle,#2a2f35 0,#2a2f35 25%,transparent 70%)"></div><div class="star" style="left:867.8px;top:188.8px;width:2.4px;height:2.4px;background:radial-gradient(circle,#5c5237 0,#5c5237 25%,transparent 70%)"></div><div class="star" style="left:205.6px;top:133.9px;width:2.4px;height:2.4px;background:radial-gradient(circle,#584a2c 0,#584a2c 25%,transparent 70%)"></div><div class="star" style="left:96.5px;top:378.8px;width:2.4px;height:2.4px;background:radial-gradient(circle,#4f472f 0,#4f472f 25%,transparent 70%)"></div><div class="star" style="left:802.0px;top:294.4px;width:2.4px;height:2.4px;background:radial-gradient(circle,#525252 0,#525252 25%,transparent 70%)"></div><div class="star" style="left:848.9px;top:88.1px;width:2.4px;height:2.4px;background:radial-gradient(circle,#414141 0,#414141 25%,transparent 70%)"></div><div class="star" style="left:189.6px;top:592.2px;width:2.4px;height:2.4px;background:radial-gradient(circle,#272c31 0,#272c31 25%,transparent 70%)"></div><div class="star" style="left:45.2px;top:35.6px;width:2.4px;height:2.4px;background:radial-gradient(circle,#343a41 0,#343a41 25%,transparent 70%)"></div><div class="star" style="left:803.6px;top:537.1px;width:2.4px;height:2.4px;background:radial-gradient(circle,#565656 0,#565656 25%,transparent 70%)"></div><div class="star" style="left:892.6px;top:566.3px;width:2.4px;height:2.4px;background:radial-gradient(circle,#3d3624 0,#3d3624 25%,transparent 70%)"></div><div class="star" style="left:165.0px;top:569.0px;width:2.4px;height:2.4px;background:radial-gradient(circle,#454e57 0,#454e57 25%,transparent 70%)"></div><div class="star" style="left:27.4px;top:403.6px;width:2.4px;height:2.4px;background:radial-gradient(circle,#403620 0,#403620 25%,transparent 70%)"></div><div class="star" style="left:881.3px;top:268.4px;width:2.4px;height:2.4px;background:radial-gradient(circle,#2e2e2e 0,#2e2e2e 25%,transparent 70%)"></div><div class="star" style="left:68.9px;top:48.2px;width:2.4px;height:2.4px;background:radial-gradient(circle,#424242 0,#424242 25%,transparent 70%)"></div><div class="star" style="left:501.6px;top:461.1px;width:2.4px;height:2.4px;background:radial-gradient(circle,#403620 0,#403620 25%,transparent 70%)"></div><div class="star" style="left:687.6px;top:187.0px;width:2.4px;height:2.4px;background:radial-gradient(circle,#48515b 0,#48515b 25%,transparent 70%)"></div><div class="star" style="left:77.4px;top:428.5px;width:2.4px;height:2.4px;background:radial-gradient(circle,#342c1a 0,#342c1a 25%,transparent 70%)"></div><div class="star" style="left:484.0px;top:270.8px;width:2.4px;height:2.4px;background:radial-gradient(circle,#3c331e 0,#3c331e 25%,transparent 70%)"></div><div class="star" style="left:659.4px;top:288.0px;width:2.4px;height:2.4px;background:radial-gradient(circle,#404850 0,#404850 25%,transparent 70%)"></div><div class="star" style="left:221.0px;top:379.9px;width:2.4px;height:2.4px;background:radial-gradient(circle,#414141 0,#414141 25%,transparent 70%)"></div><div class="star" style="left:335.3px;top:281.6px;width:2.4px;height:2.4px;background:radial-gradient(circle,#5b5b5b 0,#5b5b5b 25%,transparent 70%)"></div><div class="star" style="left:229.1px;top:454.1px;width:2.4px;height:2.4px;background:radial-gradient(circle,#4e4227 0,#4e4227 25%,transparent 70%)"></div><div class="star" style="left:324.0px;top:203.0px;width:2.4px;height:2.4px;background:radial-gradient(circle,#4f4f4f 0,#4f4f4f 25%,transparent 70%)"></div><div class="star" style="left:233.7px;top:435.4px;width:2.4px;height:2.4px;background:radial-gradient(circle,#3c331e 0,#3c331e 25%,transparent 70%)"></div><div class="star" style="left:265.3px;top:438.4px;width:2.4px;height:2.4px;background:radial-gradient(circle,#4e4e4e 0,#4e4e4e 25%,transparent 70%)"></div><div class="star" style="left:20.5px;top:141.4px;width:2.4px;height:2.4px;background:radial-gradient(circle,#383f46 0,#383f46 25%,transparent 70%)"></div><div class="star" style="left:853.5px;top:234.4px;width:2.4px;height:2.4px;background:radial-gradient(circle,#2c3238 0,#2c3238 25%,transparent 70%)"></div><div class="star" style="left:728.9px;top:79.8px;width:2.4px;height:2.4px;background:radial-gradient(circle,#473f2a 0,#473f2a 25%,transparent 70%)"></div><div class="star" style="left:6.6px;top:566.0px;width:2.4px;height:2.4px;background:radial-gradient(circle,#3b3523 0,#3b3523 25%,transparent 70%)"></div><div class="star" style="left:542.9px;top:198.6px;width:2.4px;height:2.4px;background:radial-gradient(circle,#30363c 0,#30363c 25%,transparent 70%)"></div><div class="star" style="left:323.0px;top:475.4px;width:2.4px;height:2.4px;background:radial-gradient(circle,#1f2d1f 0,#1f2d1f 25%,transparent 70%)"></div><div class="star" style="left:175.6px;top:457.5px;width:2.4px;height:2.4px;background:radial-gradient(circle,#2c3137 0,#2c3137 25%,transparent 70%)"></div><div class="star" style="left:56.8px;top:19.6px;width:2.4px;height:2.4px;background:radial-gradient(circle,#344b34 0,#344b34 25%,transparent 70%)"></div><div class="star" style="left:290.7px;top:596.0px;width:2.4px;height:2.4px;background:radial-gradient(circle,#2e2e2e 0,#2e2e2e 25%,transparent 70%)"></div><div class="star" style="left:236.1px;top:50.2px;width:2.4px;height:2.4px;background:radial-gradient(circle,#24292e 0,#24292e 25%,transparent 70%)"></div><div class="star" style="left:445.4px;top:431.3px;width:2.4px;height:2.4px;background:radial-gradient(circle,#443d28 0,#443d28 25%,transparent 70%)"></div><div class="star" style="left:208.6px;top:252.9px;width:2.4px;height:2.4px;background:radial-gradient(circle,#4f472f 0,#4f472f 25%,transparent 70%)"></div><div class="star" style="left:669.0px;top:514.8px;width:2.4px;height:2.4px;background:radial-gradient(circle,#525252 0,#525252 25%,transparent 70%)"></div><div class="star" style="left:697.5px;top:178.0px;width:2.4px;height:2.4px;background:radial-gradient(circle,#273927 0,#273927 25%,transparent 70%)"></div><div class="star" style="left:238.6px;top:153.7px;width:2.4px;height:2.4px;background:radial-gradient(circle,#383221 0,#383221 25%,transparent 70%)"></div><div class="star" style="left:392.5px;top:112.1px;width:2.4px;height:2.4px;background:radial-gradient(circle,#373121 0,#373121 25%,transparent 70%)"></div><div class="star" style="left:250.9px;top:551.7px;width:2.4px;height:2.4px;background:radial-gradient(circle,#342c1a 0,#342c1a 25%,transparent 70%)"></div><div class="star" style="left:56.9px;top:152.3px;width:2.4px;height:2.4px;background:radial-gradient(circle,#263726 0,#263726 25%,transparent 70%)"></div><div class="star" style="left:470.4px;top:394.6px;width:2.4px;height:2.4px;background:radial-gradient(circle,#24292e 0,#24292e 25%,transparent 70%)"></div><div class="star" style="left:886.7px;top:61.3px;width:2.4px;height:2.4px;background:radial-gradient(circle,#463f2a 0,#463f2a 25%,transparent 70%)"></div><div class="star" style="left:751.9px;top:555.9px;width:2.4px;height:2.4px;background:radial-gradient(circle,#2a2315 0,#2a2315 25%,transparent 70%)"></div><div class="star" style="left:207.5px;top:29.7px;width:2.4px;height:2.4px;background:radial-gradient(circle,#364e36 0,#364e36 25%,transparent 70%)"></div><div class="star" style="left:172.8px;top:44.7px;width:2.4px;height:2.4px;background:radial-gradient(circle,#48402b 0,#48402b 25%,transparent 70%)"></div><div class="star" style="left:401.2px;top:157.3px;width:2.4px;height:2.4px;background:radial-gradient(circle,#595959 0,#595959 25%,transparent 70%)"></div><div class="star" style="left:93.6px;top:362.1px;width:2.4px;height:2.4px;background:radial-gradient(circle,#4f4327 0,#4f4327 25%,transparent 70%)"></div><div class="star" style="left:193.8px;top:223.5px;width:2.4px;height:2.4px;background:radial-gradient(circle,#313131 0,#313131 25%,transparent 70%)"></div><div class="star" style="left:181.6px;top:154.2px;width:2.4px;height:2.4px;background:radial-gradient(circle,#4e462e 0,#4e462e 25%,transparent 70%)"></div><div class="star" style="left:728.8px;top:497.7px;width:2.4px;height:2.4px;background:radial-gradient(circle,#423821 0,#423821 25%,transparent 70%)"></div><div class="star" style="left:164.7px;top:189.1px;width:2.4px;height:2.4px;background:radial-gradient(circle,#353535 0,#353535 25%,transparent 70%)"></div><div class="star" style="left:711.4px;top:332.8px;width:2.4px;height:2.4px;background:radial-gradient(circle,#23272c 0,#23272c 25%,transparent 70%)"></div><div class="star" style="left:89.6px;top:239.7px;width:2.4px;height:2.4px;background:radial-gradient(circle,#4b432d 0,#4b432d 25%,transparent 70%)"></div><div class="star" style="left:571.5px;top:54.5px;width:2.4px;height:2.4px;background:radial-gradient(circle,#282d32 0,#282d32 25%,transparent 70%)"></div><div class="star" style="left:621.9px;top:248.6px;width:2.4px;height:2.4px;background:radial-gradient(circle,#3a311d 0,#3a311d 25%,transparent 70%)"></div><div class="star" style="left:373.2px;top:30.3px;width:2.4px;height:2.4px;background:radial-gradient(circle,#3c573c 0,#3c573c 25%,transparent 70%)"></div><div class="star" style="left:790.6px;top:251.2px;width:2.4px;height:2.4px;background:radial-gradient(circle,#292214 0,#292214 25%,transparent 70%)"></div><div class="star" style="left:576.3px;top:237.0px;width:2.4px;height:2.4px;background:radial-gradient(circle,#413a27 0,#413a27 25%,transparent 70%)"></div><div class="star" style="left:842.8px;top:263.4px;width:2.4px;height:2.4px;background:radial-gradient(circle,#282d32 0,#282d32 25%,transparent 70%)"></div><div class="star" style="left:100.5px;top:54.1px;width:2.4px;height:2.4px;background:radial-gradient(circle,#4c4026 0,#4c4026 25%,transparent 70%)"></div><div class="star" style="left:411.8px;top:98.0px;width:2.4px;height:2.4px;background:radial-gradient(circle,#282828 0,#282828 25%,transparent 70%)"></div><div class="star" style="left:493.0px;top:389.2px;width:2.4px;height:2.4px;background:radial-gradient(circle,#414141 0,#414141 25%,transparent 70%)"></div><div class="star" style="left:512.1px;top:563.7px;width:2.4px;height:2.4px;background:radial-gradient(circle,#3c573c 0,#3c573c 25%,transparent 70%)"></div><div class="star" style="left:152.6px;top:210.9px;width:2.4px;height:2.4px;background:radial-gradient(circle,#233223 0,#233223 25%,transparent 70%)"></div><div class="star" style="left:152.7px;top:39.9px;width:2.4px;height:2.4px;background:radial-gradient(circle,#333940 0,#333940 25%,transparent 70%)"></div><div class="star" style="left:674.0px;top:481.4px;width:2.4px;height:2.4px;background:radial-gradient(circle,#5b5136 0,#5b5136 25%,transparent 70%)"></div><div class="star" style="left:269.0px;top:508.9px;width:2.4px;height:2.4px;background:radial-gradient(circle,#21252a 0,#21252a 25%,transparent 70%)"></div><div class="star" style="left:698.8px;top:89.5px;width:17.6px;height:17.6px;background:radial-gradient(circle,rgba(200,220,255,.45) 0,rgba(200,220,255,.12) 40%,transparent 70%)"></div><div class="star" style="left:703.6px;top:94.3px;width:8.0px;height:8.0px;background:radial-gradient(circle,#f4f8ff 0,#f4f8ff 22%,rgba(244,248,255,0.45) 42%,transparent 70%)"></div><div class="star" style="left:394.4px;top:287.5px;width:10.2px;height:10.2px;background:radial-gradient(circle,rgba(200,220,255,.45) 0,rgba(200,220,255,.12) 40%,transparent 70%)"></div><div class="star" style="left:397.2px;top:290.3px;width:4.6px;height:4.6px;background:radial-gradient(circle,#ffffff 0,#ffffff 22%,rgba(255,255,255,0.45) 42%,transparent 70%)"></div><div class="star" style="left:471.3px;top:478.9px;width:10.2px;height:10.2px;background:radial-gradient(circle,rgba(200,220,255,.45) 0,rgba(200,220,255,.12) 40%,transparent 70%)"></div><div class="star" style="left:474.1px;top:481.7px;width:4.6px;height:4.6px;background:radial-gradient(circle,#fff0c8 0,#fff0c8 22%,rgba(255,240,200,0.45) 42%,transparent 70%)"></div><div class="star" style="left:-4.3px;top:416.2px;width:9.6px;height:9.6px;background:radial-gradient(circle,rgba(200,220,255,.45) 0,rgba(200,220,255,.12) 40%,transparent 70%)"></div><div class="star" style="left:-1.7px;top:418.8px;width:4.3px;height:4.3px;background:radial-gradient(circle,#ffffff 0,#ffffff 22%,rgba(255,255,255,0.45) 42%,transparent 70%)"></div><div class="star" style="left:886.8px;top:492.6px;width:4.3px;height:4.3px;background:radial-gradient(circle,#e0ecff 0,#e0ecff 22%,rgba(224,236,255,0.45) 42%,transparent 70%)"></div><div class="star" style="left:790.5px;top:534.1px;width:4.3px;height:4.3px;background:radial-gradient(circle,#eef4ff 0,#eef4ff 22%,rgba(238,244,255,0.45) 42%,transparent 70%)"></div><div class="star" style="left:250.1px;top:569.5px;width:4.3px;height:4.3px;background:radial-gradient(circle,#ffffff 0,#ffffff 22%,rgba(255,255,255,0.45) 42%,transparent 70%)"></div><div class="star" style="left:290.2px;top:168.1px;width:4.3px;height:4.3px;background:radial-gradient(circle,#fff0e0 0,#fff0e0 22%,rgba(255,240,224,0.45) 42%,transparent 70%)"></div><div class="star" style="left:687.6px;top:134.7px;width:3.8px;height:3.8px;background:radial-gradient(circle,#dbdbdb 0,#dbdbdb 22%,rgba(219,219,219,0.45) 42%,transparent 70%)"></div><div class="star" style="left:721.3px;top:238.3px;width:3.5px;height:3.5px;background:radial-gradient(circle,#c2c9d5 0,#c2c9d5 22%,rgba(194,201,213,0.45) 42%,transparent 70%)"></div><div class="star" style="left:326.9px;top:23.9px;width:3.5px;height:3.5px;background:radial-gradient(circle,#d5d5d5 0,#d5d5d5 22%,rgba(213,213,213,0.45) 42%,transparent 70%)"></div><div class="star" style="left:399.4px;top:80.4px;width:3.2px;height:3.2px;background:radial-gradient(circle,#cfcfcf 0,#cfcfcf 22%,rgba(207,207,207,0.45) 42%,transparent 70%)"></div><div class="star" style="left:409.3px;top:214.7px;width:3.5px;height:3.5px;background:radial-gradient(circle,#d5d5d5 0,#d5d5d5 22%,rgba(213,213,213,0.45) 42%,transparent 70%)"></div><div class="star" style="left:417.4px;top:210.2px;width:3.2px;height:3.2px;background:radial-gradient(circle,#cfcfcf 0,#cfcfcf 22%,rgba(207,207,207,0.45) 42%,transparent 70%)"></div><div class="star" style="left:422.4px;top:213.7px;width:3.2px;height:3.2px;background:radial-gradient(circle,#c3b69c 0,#c3b69c 22%,rgba(195,182,156,0.45) 42%,transparent 70%)"></div><div class="star" style="left:274.7px;top:248.3px;width:3.5px;height:3.5px;background:radial-gradient(circle,#c2ccd5 0,#c2ccd5 22%,rgba(194,204,213,0.45) 42%,transparent 70%)"></div><div class="star" style="left:357.4px;top:538.4px;width:3.2px;height:3.2px;background:radial-gradient(circle,#a9b6cf 0,#a9b6cf 22%,rgba(169,182,207,0.45) 42%,transparent 70%)"></div><div class="star" style="left:297.9px;top:588.9px;width:3.2px;height:3.2px;background:radial-gradient(circle,#b6824e 0,#b6824e 22%,rgba(182,130,78,0.45) 42%,transparent 70%)"></div><div class="star" style="left:257.8px;top:212.4px;width:3.2px;height:3.2px;background:radial-gradient(circle,#c3a968 0,#c3a968 22%,rgba(195,169,104,0.45) 42%,transparent 70%)"></div><div class="star" style="left:172.0px;top:236.4px;width:3.2px;height:3.2px;background:radial-gradient(circle,#cfc39c 0,#cfc39c 22%,rgba(207,195,156,0.45) 42%,transparent 70%)"></div><div class="star" style="left:200.6px;top:184.1px;width:2.9px;height:2.9px;background:radial-gradient(circle,#bdb7b0 0,#bdb7b0 22%,rgba(189,183,176,0.45) 42%,transparent 70%)"></div><div class="star" style="left:328.6px;top:188.4px;width:2.9px;height:2.9px;background:radial-gradient(circle,#bdbdc9 0,#bdbdc9 22%,rgba(189,189,201,0.45) 42%,transparent 70%)"></div><div class="star" style="left:100.1px;top:19.6px;width:2.9px;height:2.9px;background:radial-gradient(circle,#bdb797 0,#bdb797 22%,rgba(189,183,151,0.45) 42%,transparent 70%)"></div><div class="star" style="left:89.1px;top:65.0px;width:2.9px;height:2.9px;background:radial-gradient(circle,#b0aa7e 0,#b0aa7e 22%,rgba(176,170,126,0.45) 42%,transparent 70%)"></div><div class="star" style="left:649.5px;top:150.4px;width:2.9px;height:2.9px;background:radial-gradient(circle,#c9c9c9 0,#c9c9c9 22%,rgba(201,201,201,0.45) 42%,transparent 70%)"></div><div class="star" style="left:787.0px;top:162.6px;width:2.9px;height:2.9px;background:radial-gradient(circle,#b0b0c9 0,#b0b0c9 22%,rgba(176,176,201,0.45) 42%,transparent 70%)"></div><div class="star" style="left:644.5px;top:250.6px;width:2.9px;height:2.9px;background:radial-gradient(circle,#97aabd 0,#97aabd 22%,rgba(151,170,189,0.45) 42%,transparent 70%)"></div><div class="star" style="left:572.4px;top:109.1px;width:3.2px;height:3.2px;background:radial-gradient(circle,#c38f34 0,#c38f34 22%,rgba(195,143,52,0.45) 42%,transparent 70%)"></div><div class="star" style="left:574.4px;top:129.7px;width:2.6px;height:2.6px;background:radial-gradient(circle,#c3c3c3 0,#c3c3c3 22%,rgba(195,195,195,0.45) 42%,transparent 70%)"></div><div class="star" style="left:601.4px;top:128.7px;width:2.6px;height:2.6px;background:radial-gradient(circle,#c3c3c3 0,#c3c3c3 22%,rgba(195,195,195,0.45) 42%,transparent 70%)"></div><div class="star" style="left:602.4px;top:50.7px;width:2.6px;height:2.6px;background:radial-gradient(circle,#aba593 0,#aba593 22%,rgba(171,165,147,0.45) 42%,transparent 70%)"></div><div class="star" style="left:626.6px;top:50.8px;width:2.3px;height:2.3px;background:radial-gradient(circle,#9a6a3b 0,#9a6a3b 22%,rgba(154,106,59,0.45) 42%,transparent 70%)"></div><div class="star" style="left:515.6px;top:61.7px;width:2.6px;height:2.6px;background:radial-gradient(circle,#b7ab86 0,#b7ab86 22%,rgba(183,171,134,0.45) 42%,transparent 70%)"></div><div class="star" style="left:471.8px;top:41.8px;width:2.3px;height:2.3px;background:radial-gradient(circle,#8e8e76 0,#8e8e76 22%,rgba(142,142,118,0.45) 42%,transparent 70%)"></div><div class="star" style="left:811.7px;top:64.7px;width:2.6px;height:2.6px;background:radial-gradient(circle,#ab7a49 0,#ab7a49 22%,rgba(171,122,73,0.45) 42%,transparent 70%)"></div><div class="star" style="left:791.5px;top:58.8px;width:2.3px;height:2.3px;background:radial-gradient(circle,#9a8e5e 0,#9a8e5e 22%,rgba(154,142,94,0.45) 42%,transparent 70%)"></div><div class="star" style="left:676.7px;top:95.8px;width:2.3px;height:2.3px;background:radial-gradient(circle,#8e7647 0,#8e7647 22%,rgba(142,118,71,0.45) 42%,transparent 70%)"></div><div class="star" style="left:641.9px;top:112.4px;width:2.2px;height:2.2px;background:radial-gradient(circle,#8c743a 0,#8c743a 22%,rgba(140,116,58,0.45) 42%,transparent 70%)"></div><div class="star" style="left:623.9px;top:141.9px;width:2.2px;height:2.2px;background:radial-gradient(circle,#8c743a 0,#8c743a 22%,rgba(140,116,58,0.45) 42%,transparent 70%)"></div><div class="star" style="left:625.3px;top:173.4px;width:2.2px;height:2.2px;background:radial-gradient(circle,#8c743a 0,#8c743a 22%,rgba(140,116,58,0.45) 42%,transparent 70%)"></div><div class="star" style="left:567.4px;top:187.5px;width:2.3px;height:2.3px;background:radial-gradient(circle,#9a8e5e 0,#9a8e5e 22%,rgba(154,142,94,0.45) 42%,transparent 70%)"></div><div class="star" style="left:473.0px;top:266.5px;width:2.6px;height:2.6px;background:radial-gradient(circle,#b7b7b7 0,#b7b7b7 22%,rgba(183,183,183,0.45) 42%,transparent 70%)"></div><div class="star" style="left:586.9px;top:273.9px;width:2.2px;height:2.2px;background:radial-gradient(circle,#8c743a 0,#8c743a 22%,rgba(140,116,58,0.45) 42%,transparent 70%)"></div><div class="star" style="left:567.5px;top:242.9px;width:2.2px;height:2.2px;background:radial-gradient(circle,#8c743a 0,#8c743a 22%,rgba(140,116,58,0.45) 42%,transparent 70%)"></div><div class="star" style="left:578.9px;top:260.3px;width:2.2px;height:2.2px;background:radial-gradient(circle,#8c743a 0,#8c743a 22%,rgba(140,116,58,0.45) 42%,transparent 70%)"></div><div class="star" style="left:821.9px;top:13.5px;width:2.2px;height:2.2px;background:radial-gradient(circle,#8c7446 0,#8c7446 22%,rgba(140,116,70,0.45) 42%,transparent 70%)"></div><div class="star" style="left:737.9px;top:278.9px;width:2.2px;height:2.2px;background:radial-gradient(circle,#8c7446 0,#8c7446 22%,rgba(140,116,70,0.45) 42%,transparent 70%)"></div><div class="star" style="left:685.2px;top:428.8px;width:2.9px;height:2.9px;background:radial-gradient(circle,#c9c9c9 0,#c9c9c9 22%,rgba(201,201,201,0.45) 42%,transparent 70%)"></div><div class="star" style="left:707.9px;top:346.2px;width:2.9px;height:2.9px;background:radial-gradient(circle,#bd9765 0,#bd9765 22%,rgba(189,151,101,0.45) 42%,transparent 70%)"></div><div class="star" style="left:600.7px;top:546.7px;width:2.6px;height:2.6px;background:radial-gradient(circle,#b7ab93 0,#b7ab93 22%,rgba(183,171,147,0.45) 42%,transparent 70%)"></div><div class="star" style="left:629.8px;top:428.8px;width:2.3px;height:2.3px;background:radial-gradient(circle,#8e8e8e 0,#8e8e8e 22%,rgba(142,142,142,0.45) 42%,transparent 70%)"></div><div class="star" style="left:586.6px;top:432.8px;width:2.3px;height:2.3px;background:radial-gradient(circle,#8e8e8e 0,#8e8e8e 22%,rgba(142,142,142,0.45) 42%,transparent 70%)"></div><div class="star" style="left:569.2px;top:327.6px;width:2.3px;height:2.3px;background:radial-gradient(circle,#9a8253 0,#9a8253 22%,rgba(154,130,83,0.45) 42%,transparent 70%)"></div><div class="star" style="left:650.8px;top:334.4px;width:2.3px;height:2.3px;background:radial-gradient(circle,#9a8253 0,#9a8253 22%,rgba(154,130,83,0.45) 42%,transparent 70%)"></div><div class="star" style="left:454.6px;top:307.3px;width:2.6px;height:2.6px;background:radial-gradient(circle,#93abc3 0,#93abc3 22%,rgba(147,171,195,0.45) 42%,transparent 70%)"></div><div class="star" style="left:782.8px;top:488.3px;width:2.3px;height:2.3px;background:radial-gradient(circle,#9a8253 0,#9a8253 22%,rgba(154,130,83,0.45) 42%,transparent 70%)"></div><div class="star" style="left:868.8px;top:470.5px;width:2.3px;height:2.3px;background:radial-gradient(circle,#9a8253 0,#9a8253 22%,rgba(154,130,83,0.45) 42%,transparent 70%)"></div><div class="star" style="left:854.8px;top:344.6px;width:2.3px;height:2.3px;background:radial-gradient(circle,#9a8e6a 0,#9a8e6a 22%,rgba(154,142,106,0.45) 42%,transparent 70%)"></div><div class="star" style="left:819.8px;top:551.8px;width:2.3px;height:2.3px;background:radial-gradient(circle,#9a8e6a 0,#9a8e6a 22%,rgba(154,142,106,0.45) 42%,transparent 70%)"></div><div class="star" style="left:852.5px;top:570.8px;width:2.3px;height:2.3px;background:radial-gradient(circle,#9a8e6a 0,#9a8e6a 22%,rgba(154,142,106,0.45) 42%,transparent 70%)"></div><div class="star" style="left:688.5px;top:509.6px;width:2.2px;height:2.2px;background:radial-gradient(circle,#8c7446 0,#8c7446 22%,rgba(140,116,70,0.45) 42%,transparent 70%)"></div><div class="star" style="left:550.5px;top:346.5px;width:2.2px;height:2.2px;background:radial-gradient(circle,#8c7446 0,#8c7446 22%,rgba(140,116,70,0.45) 42%,transparent 70%)"></div><div class="star" style="left:90.2px;top:329.9px;width:2.9px;height:2.9px;background:radial-gradient(circle,#c9c9c9 0,#c9c9c9 22%,rgba(201,201,201,0.45) 42%,transparent 70%)"></div><div class="star" style="left:422.6px;top:329.9px;width:2.9px;height:2.9px;background:radial-gradient(circle,#b07e4b 0,#b07e4b 22%,rgba(176,126,75,0.45) 42%,transparent 70%)"></div><div class="star" style="left:415.3px;top:339.8px;width:2.3px;height:2.3px;background:radial-gradient(circle,#9a8e5e 0,#9a8e5e 22%,rgba(154,142,94,0.45) 42%,transparent 70%)"></div><div class="star" style="left:168.8px;top:346.8px;width:2.3px;height:2.3px;background:radial-gradient(circle,#8e8e5e 0,#8e8e5e 22%,rgba(142,142,94,0.45) 42%,transparent 70%)"></div><div class="star" style="left:221.3px;top:351.4px;width:2.3px;height:2.3px;background:radial-gradient(circle,#8e8253 0,#8e8253 22%,rgba(142,130,83,0.45) 42%,transparent 70%)"></div><div class="star" style="left:102.5px;top:359.5px;width:2.3px;height:2.3px;background:radial-gradient(circle,#767676 0,#767676 22%,rgba(118,118,118,0.45) 42%,transparent 70%)"></div><div class="star" style="left:167.7px;top:432.7px;width:2.6px;height:2.6px;background:radial-gradient(circle,#ab9f6e 0,#ab9f6e 22%,rgba(171,159,110,0.45) 42%,transparent 70%)"></div><div class="star" style="left:382.3px;top:417.8px;width:2.3px;height:2.3px;background:radial-gradient(circle,#9a8e5e 0,#9a8e5e 22%,rgba(154,142,94,0.45) 42%,transparent 70%)"></div><div class="star" style="left:423.0px;top:441.3px;width:2.6px;height:2.6px;background:radial-gradient(circle,#ab7a49 0,#ab7a49 22%,rgba(171,122,73,0.45) 42%,transparent 70%)"></div><div class="star" style="left:391.2px;top:453.5px;width:2.3px;height:2.3px;background:radial-gradient(circle,#9a8e5e 0,#9a8e5e 22%,rgba(154,142,94,0.45) 42%,transparent 70%)"></div><div class="star" style="left:306.7px;top:483.7px;width:2.6px;height:2.6px;background:radial-gradient(circle,#ab7a49 0,#ab7a49 22%,rgba(171,122,73,0.45) 42%,transparent 70%)"></div><div class="star" style="left:149.3px;top:540.4px;width:2.3px;height:2.3px;background:radial-gradient(circle,#9a9a5e 0,#9a9a5e 22%,rgba(154,154,94,0.45) 42%,transparent 70%)"></div><div class="star" style="left:80.5px;top:558.1px;width:2.3px;height:2.3px;background:radial-gradient(circle,#8e8e8e 0,#8e8e8e 22%,rgba(142,142,142,0.45) 42%,transparent 70%)"></div><div class="star" style="left:125.2px;top:570.5px;width:2.3px;height:2.3px;background:radial-gradient(circle,#478e47 0,#478e47 22%,rgba(71,142,71,0.45) 42%,transparent 70%)"></div><div class="star" style="left:259.4px;top:412.5px;width:2.2px;height:2.2px;background:radial-gradient(circle,#8c7446 0,#8c7446 22%,rgba(140,116,70,0.45) 42%,transparent 70%)"></div><div class="star" style="left:254.9px;top:326.3px;width:2.2px;height:2.2px;background:radial-gradient(circle,#747474 0,#747474 22%,rgba(116,116,116,0.45) 42%,transparent 70%)"></div><div class="star" style="left:15.9px;top:124.5px;width:2.2px;height:2.2px;background:radial-gradient(circle,#8c8c69 0,#8c8c69 22%,rgba(140,140,105,0.45) 42%,transparent 70%)"></div><div class="star" style="left:78.5px;top:126.6px;width:2.2px;height:2.2px;background:radial-gradient(circle,#8c8c69 0,#8c8c69 22%,rgba(140,140,105,0.45) 42%,transparent 70%)"></div><div class="star" style="left:49.9px;top:93.6px;width:2.2px;height:2.2px;background:radial-gradient(circle,#747474 0,#747474 22%,rgba(116,116,116,0.45) 42%,transparent 70%)"></div><div class="star" style="left:219.9px;top:-0.3px;width:2.2px;height:2.2px;background:radial-gradient(circle,#8c7446 0,#8c7446 22%,rgba(140,116,70,0.45) 42%,transparent 70%)"></div><div class="star" style="left:134.9px;top:5.7px;width:2.2px;height:2.2px;background:radial-gradient(circle,#8c8c69 0,#8c8c69 22%,rgba(140,140,105,0.45) 42%,transparent 70%)"></div><div class="star" style="left:187.9px;top:219.5px;width:2.2px;height:2.2px;background:radial-gradient(circle,#8c8c69 0,#8c8c69 22%,rgba(140,140,105,0.45) 42%,transparent 70%)"></div><div class="star" style="left:116.5px;top:253.9px;width:2.2px;height:2.2px;background:radial-gradient(circle,#467446 0,#467446 22%,rgba(70,116,70,0.45) 42%,transparent 70%)"></div><div class="star" style="left:259.9px;top:269.5px;width:2.2px;height:2.2px;background:radial-gradient(circle,#8c8c69 0,#8c8c69 22%,rgba(140,140,105,0.45) 42%,transparent 70%)"></div><div class="star" style="left:277.9px;top:272.9px;width:2.2px;height:2.2px;background:radial-gradient(circle,#8c7446 0,#8c7446 22%,rgba(140,116,70,0.45) 42%,transparent 70%)"></div><div class="star" style="left:352.9px;top:217.9px;width:2.2px;height:2.2px;background:radial-gradient(circle,#8c7446 0,#8c7446 22%,rgba(140,116,70,0.45) 42%,transparent 70%)"></div><div class="star" style="left:400.9px;top:243.9px;width:2.2px;height:2.2px;background:radial-gradient(circle,#747474 0,#747474 22%,rgba(116,116,116,0.45) 42%,transparent 70%)"></div><div class="star" style="left:434.5px;top:141.5px;width:2.2px;height:2.2px;background:radial-gradient(circle,#8c7446 0,#8c7446 22%,rgba(140,116,70,0.45) 42%,transparent 70%)"></div><div class="star" style="left:440.9px;top:42.9px;width:2.2px;height:2.2px;background:radial-gradient(circle,#748c5d 0,#748c5d 22%,rgba(116,140,93,0.45) 42%,transparent 70%)"></div><div class="star" style="left:367.5px;top:141.9px;width:2.2px;height:2.2px;background:radial-gradient(circle,#747474 0,#747474 22%,rgba(116,116,116,0.45) 42%,transparent 70%)"></div><div class="star" style="left:373.6px;top:46.9px;width:2.2px;height:2.2px;background:radial-gradient(circle,#747474 0,#747474 22%,rgba(116,116,116,0.45) 42%,transparent 70%)"></div><div class="star" style="left:402.9px;top:138.7px;width:2.2px;height:2.2px;background:radial-gradient(circle,#5d8c5d 0,#5d8c5d 22%,rgba(93,140,93,0.45) 42%,transparent 70%)"></div><div class="star" style="left:30.6px;top:382.9px;width:2.2px;height:2.2px;background:radial-gradient(circle,#74745d 0,#74745d 22%,rgba(116,116,93,0.45) 42%,transparent 70%)"></div><div class="star" style="left:12.6px;top:399.4px;width:2.2px;height:2.2px;background:radial-gradient(circle,#747474 0,#747474 22%,rgba(116,116,116,0.45) 42%,transparent 70%)"></div><div class="star" style="left:783.9px;top:315.3px;width:2.2px;height:2.2px;background:radial-gradient(circle,#8c7446 0,#8c7446 22%,rgba(140,116,70,0.45) 42%,transparent 70%)"></div><div class="star" style="left:881.4px;top:284.4px;width:2.2px;height:2.2px;background:radial-gradient(circle,#747474 0,#747474 22%,rgba(116,116,116,0.45) 42%,transparent 70%)"></div></div>
<div class="a mono" style="left:10px;top:771px;font-size:10.6px;letter-spacing:-0.6px;color:#dcdcdc;white-space:pre;line-height:12px">25%</div>
<div class="a mono" style="left:53px;top:771px;font-size:10.6px;letter-spacing:-0.9px;color:#dcdcdc;white-space:pre;line-height:12px">FWHM:</div>
<div class="a mono" style="left:88px;top:771px;font-size:10.6px;letter-spacing:-0.6px;color:#dcdcdc;white-space:pre;line-height:12px">N/A</div>
<div class="a" style="left:899px;top:40px;width:2px;height:743px;background:#1d1d1d"></div>
<div class="a" style="left:901px;top:41px;width:683px;height:30px;background:#282929"></div>
<div class="a" style="left:901px;top:71px;width:683px;height:2px;background:#1f1f1f"></div>
<div class="lbl" style="left:918px;top:49.5px;color:#dcdcdc">Umrechnung</div>
<div class="lbl" style="left:1002px;top:49.5px;color:#dcdcdc">Sequenz</div>
<div class="lbl" style="left:1066px;top:49.5px;color:#dcdcdc">Kalibrierung</div>
<div class="lbl" style="left:1145px;top:49.5px;color:#dcdcdc">Registrierung</div>
<div class="lbl" style="left:1230px;top:49.5px;color:#dcdcdc">Grafik</div>
<div class="lbl" style="left:1283px;top:49.5px;color:#dcdcdc">Stacken</div>
<div class="lbl" style="left:1344px;top:49.5px;color:#dcdcdc">Konsole</div>
<div class="a" style="left:1334px;top:68px;width:55px;height:3px;background:#1d58b4"></div>
<div class="a" style="left:1583px;top:40px;width:3px;height:743px;background:#1d1d1d"></div>
<div class="a" style="left:1586px;top:41px;width:14px;height:741px;background:#353535;border-radius:4px;box-shadow:inset 0 0 0 1px #262626"></div>
<svg class="a" style="left:1589px;top:406px" width="8" height="12" viewBox="0 0 8 12"><path d="M2 2 L6 6 L2 10" fill="none" stroke="#e8e8e8" stroke-width="1.6"/></svg>
<div id="con"><pre><div><b>08:27:10:</b> Konvertierung erfolgreich, 2 Datei(en) für 2 Eingabedatei(en) erstellt (2 Bild(er) konvertiert, 0
fehlgeschlagen)</div><div><b>08:27:11:</b> Lese FITS: Datei testbild_00001.fit, 3 Ebene(n), 4144x2822 Pixel, 32 Bit</div><div><b>08:27:11:</b> Sequenz geladen: testbild_ (1-&gt;2)</div><div><b>08:27:11:</b> <span class="g">Ausführungsdauer: 456.93 ms</span></div><div><b>08:27:20:</b> <span class="g">Registrierung mit folgender Methode: Allgemeine Stern-Ausrichtung (Deep Sky)</span></div><div><b>08:27:20:</b> Interpolationsbegrenzung aktiv</div><div><b>08:27:20:</b> Globale Stern-Registrierung: Mit den aktuellen Speicher- und Thread-Grenzen können bis zu 2 Thread(s)
verwendet werden</div><div><b>08:27:20:</b> Lese FITS: Datei testbild_00001.fit, 3 Ebene(n), 4144x2822 Pixel, 32 Bit</div><div><b>08:27:20:</b> <span class="g">Referenz-Bild:</span></div><div><b>08:27:20:</b> Findstar: Verarbeitung für Kanal 1...</div><div><b>08:27:20:</b> 2000 Gauss Profilsterne in Bild, Kanal #1 (FWHm 4.577822) gefunden</div><div><b>08:27:20:</b> 2000 Sterne im Referenzbild gefunden, Kanal #1</div><div><b>08:27:20:</b> <span class="g">Referenz-Bild: begrenze auf 2000 hellste Sterne</span></div><div><b>08:27:20:</b> FWHMx:        4.53 "</div><div><b>08:27:20:</b> FWHMy:        4.05 "</div><div><b>08:27:20:</b> <span class="g">Globale Stern-Registrierung: in Bearbeitung...</span></div><div><b>08:27:20:</b> Lese FITS: Datei testbild_00001.fit, 3 Ebene(n), 4144x2822 Pixel, 32 Bit</div><div><b>08:27:20:</b> Lese FITS: Datei testbild_00002.fit, 3 Ebene(n), 4144x2822 Pixel, 32 Bit</div><div><b>08:27:20:</b> Findstar: Verarbeitung für Kanal 1...</div><div><b>08:27:20:</b> Speichere FITS: Datei r_testbild_00001.fit, 3 Ebene(n), 4144x2822 Pixel, 32 Bit</div><div><b>08:27:21:</b> 2000 Gauss Profilsterne in Bild, Kanal #1 (FWHm 4.664050) gefunden</div><div><b>08:27:21:</b> <span class="g">Bringe Sterne in Bild 2 zur Deckung: erledigt</span></div><div><b>08:27:21:</b> Korrespondierende Paare: 1879</div><div><b>08:27:21:</b> Paarübereinstimmungen nach Anpassung: 1879</div><div><b>08:27:21:</b> Innerhalb liegende Werte:       1.000</div><div><b>08:27:21:</b> X-Skala:       1.000</div><div><b>08:27:21:</b> Y-Skala:       0.999</div><div><b>08:27:21:</b> Skala:        0.999</div><div><b>08:27:21:</b> Drehung:   -178.922 Grad</div><div><b>08:27:21:</b> dx:       -4165.03 px</div><div><b>08:27:21:</b> dy:       -2760.96 px</div><div><b>08:27:21:</b> FWHM:         4.66 px</div><div><b>08:27:21:</b> Rundheit:     0.93</div><div><b>08:27:22:</b> Speichere FITS: Datei r_testbild_00002.fit, 3 Ebene(n), 4144x2822 Pixel, 32 Bit</div><div><b>08:27:22:</b> <span class="g">Bearbeitung der Sequenz erfolgreich.</span></div><div><b>08:27:22:</b> <span class="g">Ausführungsdauer: 2.19 s</span></div><div><b>08:27:22:</b> <span class="r">No image was registered to the reference</span></div><div><b>08:27:22:</b> Registrierung abgebrochen.</div><div><b>08:27:22:</b> Finale Bearbeitung der Sequenz fehlgeschlagen.</div></pre></div>
<div class="a" style="left:1579px;top:388.5px;width:3px;height:273px;background:#7c7c7c;border-radius:1.5px"></div>
<div class="a" style="left:901px;top:664px;width:682px;height:1px;background:#232323"></div>
<div class="a" style="left:901px;top:665px;width:682px;height:35px;background:#2b2b2b"></div>
<div class="a" style="left:903px;top:675px;width:15px;height:15px;border-radius:50%;background:radial-gradient(circle at 45% 35%,#ff5050,#dd1010 55%,#a00000)"></div>
<svg class="a" style="left:1520px;top:675px" width="14" height="16" viewBox="0 0 14 16"><path d="M4 1.2 H5.2 M6.4 1.2 H7.6 M8.8 1.2 H10" stroke="#eee" stroke-width="1.2"/><path d="M7 3 V11 M3.8 7.8 L7 11 L10.2 7.8" fill="none" stroke="#eee" stroke-width="1.6"/><path d="M1 14.2 H13" stroke="#eee" stroke-width="1.6"/></svg>
<svg class="a" style="left:1555px;top:676px" width="16" height="12" viewBox="0 0 16 12"><path d="M5 1 H14.5 Q15.5 1 15.5 2 V10 Q15.5 11 14.5 11 H5 L0.5 6 Z" fill="#eeeeee"/><path d="M8 3.5 L12 8.5 M12 3.5 L8 8.5" stroke="#2b2b2b" stroke-width="1.6"/></svg>
<div class="a" style="left:901px;top:700px;width:682px;height:1px;background:#262626"></div>
<div class="a" style="left:901px;top:701px;width:682px;height:82px;background:#323232"></div>
<div class="a" style="left:902px;top:702px;font-size:9.4px;font-weight:bold;color:#f0f0f0;line-height:12px">Befehlszeile</div>
<div class="a" style="left:918px;top:721px;width:564px;height:28px;background:#2b2b2b;border-radius:4px;box-shadow:0 0 0 1px #262626"></div>
<div class="a" style="left:926px;top:729px;font-size:9.75px;color:#8c8c8c;line-height:12px;white-space:pre">Geben Sie 'help' ein, um eine Liste mit verfügbaren Befehlen zu erhalten</div>
<div class="btn" style="left:1483px;top:721px;width:29px;height:28px;background:#2e2e2e;box-shadow:0 0 0 1px #252525"></div>
<svg class="a" style="left:1490px;top:727px" width="15" height="15" viewBox="0 0 15 15"><circle cx="7.4" cy="7.6" r="6.4" fill="#f0f0f0"/><path d="M5.7 4.2 H9.1 M5.7 11.9 H9.1 M3.6 5.9 V9.3 M11.2 5.9 V9.3" stroke="#2a2a2a" stroke-width="1.5"/><circle cx="7.4" cy="7.6" r="1.2" fill="#2a2a2a"/></svg>
<div class="btn" style="left:1513px;top:721px;width:54px;height:28px;background:#b3151d"></div>
<svg class="a" style="left:1521px;top:724px" width="17" height="19" viewBox="0 0 17 19"><path d="M4 3.5 L12.5 15.5 M12.5 3.5 L4 15.5" stroke="#7a0c10" stroke-width="4.6" stroke-linecap="round"/><path d="M4 3.5 L12.5 15.5 M12.5 3.5 L4 15.5" stroke="#e87474" stroke-width="2.8" stroke-linecap="round"/></svg>
<div class="a" style="left:1539px;top:729.5px;font-size:10.2px;letter-spacing:-0.2px;color:#f4f4f4;line-height:12px">Stop</div>
<div class="a" style="left:901px;top:760px;width:682px;text-align:center;font-size:9.6px;color:#8c8c8c;line-height:12px">Registrierung abgeschlossen.</div>
<div class="a" style="left:902px;top:772px;width:681px;height:3px;background:#17488f;border-top:1px solid #111"></div>
<div class="a" style="left:0;top:781px;width:1600px;height:2px;background:#232323"></div>
<div class="a" style="left:0;top:783px;width:1600px;height:77px;background:#333333"></div>
<div class="a" style="left:0px;top:786px;font-size:10.5px;color:#e8e8e8;line-height:12px;white-space:pre"><b style="letter-spacing:-0.55px"><i>Sequenz:</i></b><span style="letter-spacing:-0.3px"> testbild_, 2/2 Bilder ausgewählt</span></div>
<div class="btn" style="left:1px;top:803px;width:35px;height:28px;background:#363636"></div>
<div class="btn" style="left:1px;top:832px;width:35px;height:28px;background:#363636"></div>
<svg class="a" style="left:7px;top:809px" width="22" height="18" viewBox="0 0 22 18"><rect x="1.2" y="1.2" width="19.6" height="12.6" rx="0.8" fill="#e6e6e6" stroke="#7c7c7c" stroke-width="1.3"/><rect x="7.5" y="14" width="7" height="2.6" fill="none" stroke="#8a8a8a" stroke-width="1"/><circle cx="11.5" cy="7.5" r="3.6" fill="none" stroke="#7a7a7a" stroke-width="1"/><path d="M5.2 6.5 L8.8 11 L16 2.5" fill="none" stroke="#0f7a0f" stroke-width="3.4" stroke-linecap="round"/><path d="M5.2 6.5 L8.8 11 L16 2.5" fill="none" stroke="#22c022" stroke-width="2.2" stroke-linecap="round"/></svg>
<svg class="a" style="left:8px;top:834px" width="21" height="24" viewBox="0 0 21 24"><defs><linearGradient id="tg1" x1="0" y1="0" x2="0" y2="1"><stop offset="0" stop-color="#6fbf6f"/><stop offset="1" stop-color="#5f8fd0"/></linearGradient><radialGradient id="tg2" cx=".55" cy=".65" r=".5"><stop offset="0" stop-color="#ffffff"/><stop offset=".4" stop-color="#e0d0b0" stop-opacity=".8"/><stop offset="1" stop-color="#d07080" stop-opacity="0"/></radialGradient></defs><path d="M2.5 2.5 L18.5 15.5 L5.5 21.5 Z" fill="url(#tg1)" stroke="#111" stroke-width="1.2" stroke-linejoin="round"/><path d="M6 10 L18.5 15.5 L5.5 21.5 Z" fill="#c07890" opacity=".55"/><circle cx="10" cy="14.5" r="5" fill="url(#tg2)"/></svg>
<div class="a" style="left:51px;top:815.5px;width:690px;height:4px;border-radius:2px;background:#14243c"></div>
<div class="a" style="left:52px;top:816.5px;width:688px;height:2px;border-radius:1px;background:#1d55a8"></div>
<div class="a" style="left:735px;top:809px;width:16.6px;height:16.6px;border-radius:50%;background:#2b2b2b;border:1.3px solid #181818"></div>
<div class="a" style="left:52px;top:844px;width:692px;height:4px;background:#262626;border-radius:2px"></div>
<div class="a" style="left:43px;top:837.3px;width:16.6px;height:16.6px;border-radius:50%;background:#2b2b2b;border:1.3px solid #181818"></div>
<div class="a" style="left:761px;top:811px;font-size:9.2px;color:#e4e4e4;line-height:12px">65535</div>
<div class="a" style="left:761px;top:839px;font-size:9.2px;color:#e4e4e4;line-height:12px">0</div>
<div class="a" style="left:802px;top:806px;width:12px;height:12px;border-radius:50%;background:#fff;border:3px solid #2a73d8"></div>
<div class="a" style="left:819px;top:807px;font-size:10px;letter-spacing:-0.25px;color:#e6e6e6;line-height:12px">Min/Max</div>
<div class="a" style="left:802px;top:823px;width:12px;height:12px;border-radius:50%;background:#313131;border:1px solid #1e1e1e"></div>
<div class="a" style="left:819px;top:824px;font-size:10px;letter-spacing:-0.25px;color:#e6e6e6;line-height:12px">MIPS-LO/HI</div>
<div class="a" style="left:802px;top:841px;width:12px;height:12px;border-radius:50%;background:#313131;border:1px solid #1e1e1e"></div>
<div class="a" style="left:819px;top:842px;font-size:10px;letter-spacing:-0.25px;color:#e6e6e6;line-height:12px">Benutzer</div>
<div class="btn" style="left:880px;top:816px;width:50px;height:31px;background:#363636;box-shadow:0 0 0 1px #262626"></div>
<div class="a" style="left:885px;top:825px;font-size:9.7px;color:#e6e6e6;line-height:12px">Linear</div>
<svg class="a" style="left:913px;top:828px" width="10" height="7" viewBox="0 0 10 7"><path d="M1 1.2 L5 5.2 L9 1.2" fill="none" stroke="#ededed" stroke-width="1.8"/></svg>
<div class="a" style="left:931px;top:816px;width:31px;height:31px;background:#262626;border-radius:5px"></div>
<svg class="a" style="left:938px;top:823px" width="18" height="16" viewBox="0 0 18 16"><ellipse cx="4.5" cy="12" rx="3.2" ry="2" transform="rotate(-40 4.5 12)" fill="none" stroke="#c02020" stroke-width="1.3"/><ellipse cx="9" cy="8" rx="3.2" ry="2" transform="rotate(-50 9 8)" fill="none" stroke="#20a020" stroke-width="1.3"/><ellipse cx="13.3" cy="4" rx="3.2" ry="2" transform="rotate(-60 13.3 4)" fill="none" stroke="#2050c0" stroke-width="1.3"/></svg>
<div class="a" style="left:969px;top:818px;width:27px;height:27px;border-radius:4px;overflow:hidden;background:#3a3a3a"><div class="a" style="left:12.8px;top:0;width:15px;height:27px;background:#ffffff"></div></div>
<svg class="a" style="left:970px;top:818.5px" width="26" height="26" viewBox="0 0 26 26"><path d="M13.50 5.40 L16.03 10.12 L21.30 11.07 L17.59 14.93 L18.32 20.23 L13.50 17.90 L8.68 20.23 L9.41 14.93 L5.70 11.07 L10.97 10.12 Z" fill="none" stroke="#262626" stroke-width="2.3" stroke-linejoin="round"/></svg>
<div class="a" style="left:1008px;top:818px;width:27px;height:27px;border-radius:4px;overflow:hidden;background:#2a2f38"><div class="a" style="left:13.8px;top:0;width:14px;height:27px;background:#2b45d8"></div></div>
<svg class="a" style="left:1009px;top:818.5px" width="26" height="26" viewBox="0 0 26 26"><defs><clipPath id="lh"><rect x="0" y="0" width="12.8" height="26"/></clipPath><clipPath id="rh"><rect x="12.8" y="0" width="14" height="26"/></clipPath></defs><g clip-path="url(#lh)"><path d="M13.50 5.40 L16.03 10.12 L21.30 11.07 L17.59 14.93 L18.32 20.23 L13.50 17.90 L8.68 20.23 L9.41 14.93 L5.70 11.07 L10.97 10.12 Z" fill="#d8a872" stroke="#1c2026" stroke-width="2.4" stroke-linejoin="round"/><path d="M13.50 5.40 L16.03 10.12 L21.30 11.07 L17.59 14.93 L18.32 20.23 L13.50 17.90 L8.68 20.23 L9.41 14.93 L5.70 11.07 L10.97 10.12 Z" fill="none" stroke="#a0d060" stroke-width="0.9" stroke-linejoin="round" opacity=".8"/></g><g clip-path="url(#rh)"><path d="M13.50 5.40 L16.03 10.12 L21.30 11.07 L17.59 14.93 L18.32 20.23 L13.50 17.90 L8.68 20.23 L9.41 14.93 L5.70 11.07 L10.97 10.12 Z" fill="#e05a5a" stroke="#5cc83e" stroke-width="2.6" stroke-linejoin="round"/></g></svg>
<svg class="a" style="left:1058px;top:818px" width="28" height="28" viewBox="0 0 28 28"><circle cx="14" cy="14" r="10.3" fill="none" stroke="#9a9a9a" stroke-width="1.1"/><circle cx="6" cy="5.2" r="3.8" fill="#333" stroke="#9a9a9a" stroke-width="1.1"/><path d="M10.2 13.2 C10 9.6 15.6 9 16.9 11.6 C17.8 13.6 15.4 15.2 13.8 14 M17.8 14.8 C18 18.4 12.4 19 11.1 16.4 C10.2 14.4 12.6 12.8 14.2 14" fill="none" stroke="#b8804a" stroke-width="1.2"/><path d="M4.6 4.2 C5.5 3.6 7.2 4.2 6.8 5.6" fill="none" stroke="#c08a40" stroke-width="0.9"/><path d="M24.5 2.3 Q24.9 4.1 26.7 4.5 Q24.9 4.9 24.5 6.7 Q24.1 4.9 22.3 4.5 Q24.1 4.1 24.5 2.3 Z" fill="#b07a40"/><path d="M3.5 21.3 Q3.9 23.1 5.7 23.5 Q3.9 23.9 3.5 25.7 Q3.1 23.9 1.2999999999999998 23.5 Q3.1 23.1 3.5 21.3 Z" fill="#b07a40"/><path d="M25 22.3 Q25.4 24.1 27.2 24.5 Q25.4 24.9 25 26.7 Q24.6 24.9 22.8 24.5 Q24.6 24.1 25 22.3 Z" fill="#b07a40"/></svg>
<svg class="a" style="left:1097px;top:817px" width="29" height="29" viewBox="0 0 29 29"><g fill="none" stroke="#9a9a9a" stroke-width="1.2"><circle cx="14.5" cy="14.5" r="13"/><ellipse cx="14.5" cy="14.5" rx="6.5" ry="13"/><path d="M14.5 1.5 V27.5 M1.5 14.5 H27.5 M3.5 8 H25.5 M3.5 21 H25.5"/></g></svg>
<svg class="a" style="left:1136px;top:817px" width="29" height="29" viewBox="0 0 29 29"><g fill="none" stroke="#40c040" stroke-width="1.3"><circle cx="14.5" cy="14.5" r="12.6"/><circle cx="14.5" cy="14.5" r="9.2"/></g><circle cx="14.5" cy="14.5" r="4.3" fill="none" stroke="#c86a20" stroke-width="1.5"/><circle cx="14.5" cy="14.5" r="1" fill="#f0a040"/></svg>
<svg class="a" style="left:1176px;top:819px" width="28" height="25" viewBox="0 0 28 25"><path d="M2 23 H8.5 Q11 23 12 16 Q13 3 14 3 Q15 3 16 16 Q17 23 19.5 23 H26" fill="none" stroke="#4fc84f" stroke-width="1.4"/><path d="M14 8.5 Q14.4 14.1 20 14.5 Q14.4 14.9 14 20.5 Q13.6 14.9 8 14.5 Q13.6 14.1 14 8.5 Z" fill="#f4eee6"/><path d="M14 11.9 Q14.4 14.1 16.6 14.5 Q14.4 14.9 14 17.1 Q13.6 14.9 11.4 14.5 Q13.6 14.1 14 11.9 Z" fill="#e0a060"/><path d="M1.5 18.5 L3.5 21.5 L5.5 18.5 Z M22.5 18.5 L24.5 21.5 L26.5 18.5 Z" fill="#d07020"/></svg>
<div class="a" style="left:1300px;top:812px;width:38px;height:39px;border-radius:5px;background:#1c1c1c"></div>
<div class="a" style="left:1229px;top:820px;width:24px;height:24px;border-radius:5px;background:#ececec"></div>
<div class="a" style="left:1234px;top:830px;width:14px;height:4px;background:#333"></div>
<div class="a" style="left:1268px;top:820px;width:24px;height:24px;border-radius:5px;background:#ececec"></div>
<div class="a" style="left:1273px;top:830px;width:14px;height:3.5px;background:#333"></div>
<div class="a" style="left:1278.2px;top:825px;width:3.5px;height:14px;background:#333"></div>
<div class="a" style="left:1307px;top:820px;width:24px;height:24px;border-radius:5px;background:#ececec"></div>
<svg class="a" style="left:1310px;top:823px" width="18" height="18" viewBox="0 0 18 18"><path d="M1.5 6.5 V1.5 H6.5 M11.5 1.5 H16.5 V6.5 M16.5 11.5 V16.5 H11.5 M6.5 16.5 H1.5 V11.5" fill="none" stroke="#1c1c1c" stroke-width="3"/></svg>
<div class="a" style="left:1346px;top:820px;width:24px;height:24px;border-radius:5px;background:#ececec"></div>
<svg class="a" style="left:1353px;top:825px" width="10" height="15" viewBox="0 0 10 15"><path d="M1 4 L5.5 1 H7.5 V14" fill="none" stroke="#333" stroke-width="3.2" stroke-linejoin="miter"/></svg>
<svg class="a" style="left:1394px;top:816.5px" width="30" height="30" viewBox="-15 -15 30 30"><g transform="rotate(-45)"><rect x="-8.3" y="-8.3" width="16.6" height="16.6" fill="#394352" stroke="#8a8a8a" stroke-width="1"/><circle cx="-3.8" cy="-3.8" r="1.7" fill="#d8a050"/><path d="M-7.8 7.8 V1.5 L-3.5 -0.5 L-1 1.5 V3.2 L3 3.2 L7.8 5 V7.8 Z" fill="#2a7a62"/></g><path d="M-2.5 -12.8 A12.5 12.5 0 0 0 -12.3 -3.5" fill="none" stroke="#8e8e8e" stroke-width="1.1"/><path d="M-13.6 -6.2 L-12.4 -2.8 L-9.6 -4.6" fill="none" stroke="#8e8e8e" stroke-width="1.1"/><path d="M2.5 12.8 A12.5 12.5 0 0 0 12.3 3.5" fill="none" stroke="#8e8e8e" stroke-width="1.1"/><path d="M13.6 6.2 L12.4 2.8 L9.6 4.6" fill="none" stroke="#8e8e8e" stroke-width="1.1"/></svg>
<svg class="a" style="left:1433.5px;top:816.5px" width="30" height="30" viewBox="-15 -15 30 30"><g transform="rotate(45)"><rect x="-8.3" y="-8.3" width="16.6" height="16.6" fill="#394352" stroke="#8a8a8a" stroke-width="1"/><circle cx="-3.8" cy="-3.8" r="1.7" fill="#d8a050"/><path d="M-7.8 7.8 V1.5 L-3.5 -0.5 L-1 1.5 V3.2 L3 3.2 L7.8 5 V7.8 Z" fill="#2a7a62"/></g><g transform="scale(-1,1)"><path d="M-2.5 -12.8 A12.5 12.5 0 0 0 -12.3 -3.5" fill="none" stroke="#8e8e8e" stroke-width="1.1"/><path d="M-13.6 -6.2 L-12.4 -2.8 L-9.6 -4.6" fill="none" stroke="#8e8e8e" stroke-width="1.1"/><path d="M2.5 12.8 A12.5 12.5 0 0 0 12.3 3.5" fill="none" stroke="#8e8e8e" stroke-width="1.1"/><path d="M13.6 6.2 L12.4 2.8 L9.6 4.6" fill="none" stroke="#8e8e8e" stroke-width="1.1"/></g></svg>
<svg class="a" style="left:1472px;top:816px" width="30" height="30" viewBox="0 0 30 30"><text x="4" y="13" font-family="Liberation Sans" font-weight="bold" font-size="13" fill="#22509c">R</text><text x="4" y="-17" transform="scale(1,-1)" font-family="Liberation Sans" font-weight="bold" font-size="13" fill="#673088">R</text><path d="M0 15 H27" stroke="#a8a8a8" stroke-width="2"/><path d="M20 4 Q25 15 20 25 M17.5 22.5 L20 25.5 L22.5 22" fill="none" stroke="#a8a8a8" stroke-width="1"/></svg>
<svg class="a" style="left:1512px;top:816px" width="30" height="30" viewBox="0 0 30 30"><text x="1.5" y="25" font-family="Liberation Sans" font-weight="bold" font-size="12" fill="#22509c">R</text><text x="-28" y="25" transform="scale(-1,1)" font-family="Liberation Sans" font-weight="bold" font-size="12" fill="#673088">R</text><path d="M15 1 V28" stroke="#a8a8a8" stroke-width="2"/><path d="M4 8 Q14 2 24 8 M21 5 L24.5 8 L21 10" fill="none" stroke="#a8a8a8" stroke-width="1"/></svg>
<svg class="a" style="left:1562px;top:816px" width="32" height="32" viewBox="0 0 32 32"><rect x="11" y="12.5" width="16" height="16" fill="#3a4250" stroke="#c8c8c8" stroke-width="1"/><rect x="8" y="9.0" width="16" height="16" fill="#3a4250" stroke="#c8c8c8" stroke-width="1"/><rect x="5" y="5.5" width="16" height="16" fill="#3a4250" stroke="#c8c8c8" stroke-width="1"/><rect x="2" y="2.0" width="16" height="16" fill="#3a4250" stroke="#c8c8c8" stroke-width="1"/><circle cx="6.5" cy="6.5" r="1.7" fill="#e0a050"/><path d="M2.5 17.5 L7 12 L10 14.5 L13 11 L17.5 16 V17.5 Z" fill="#30a080"/><path d="M19 16 L28 26" stroke="#30a080" stroke-width="2"/></svg>
<svg class="a" style="left:0;top:0" width="1600" height="860" viewBox="0 0 1600 860"><g stroke="#e21b2c" stroke-width="4.6" stroke-linecap="round" fill="none"><path d="M464.5 441.5 L951 615.5"/><path d="M943 599.5 L952 615.5 L934 624"/></g></svg>
</body></html>
